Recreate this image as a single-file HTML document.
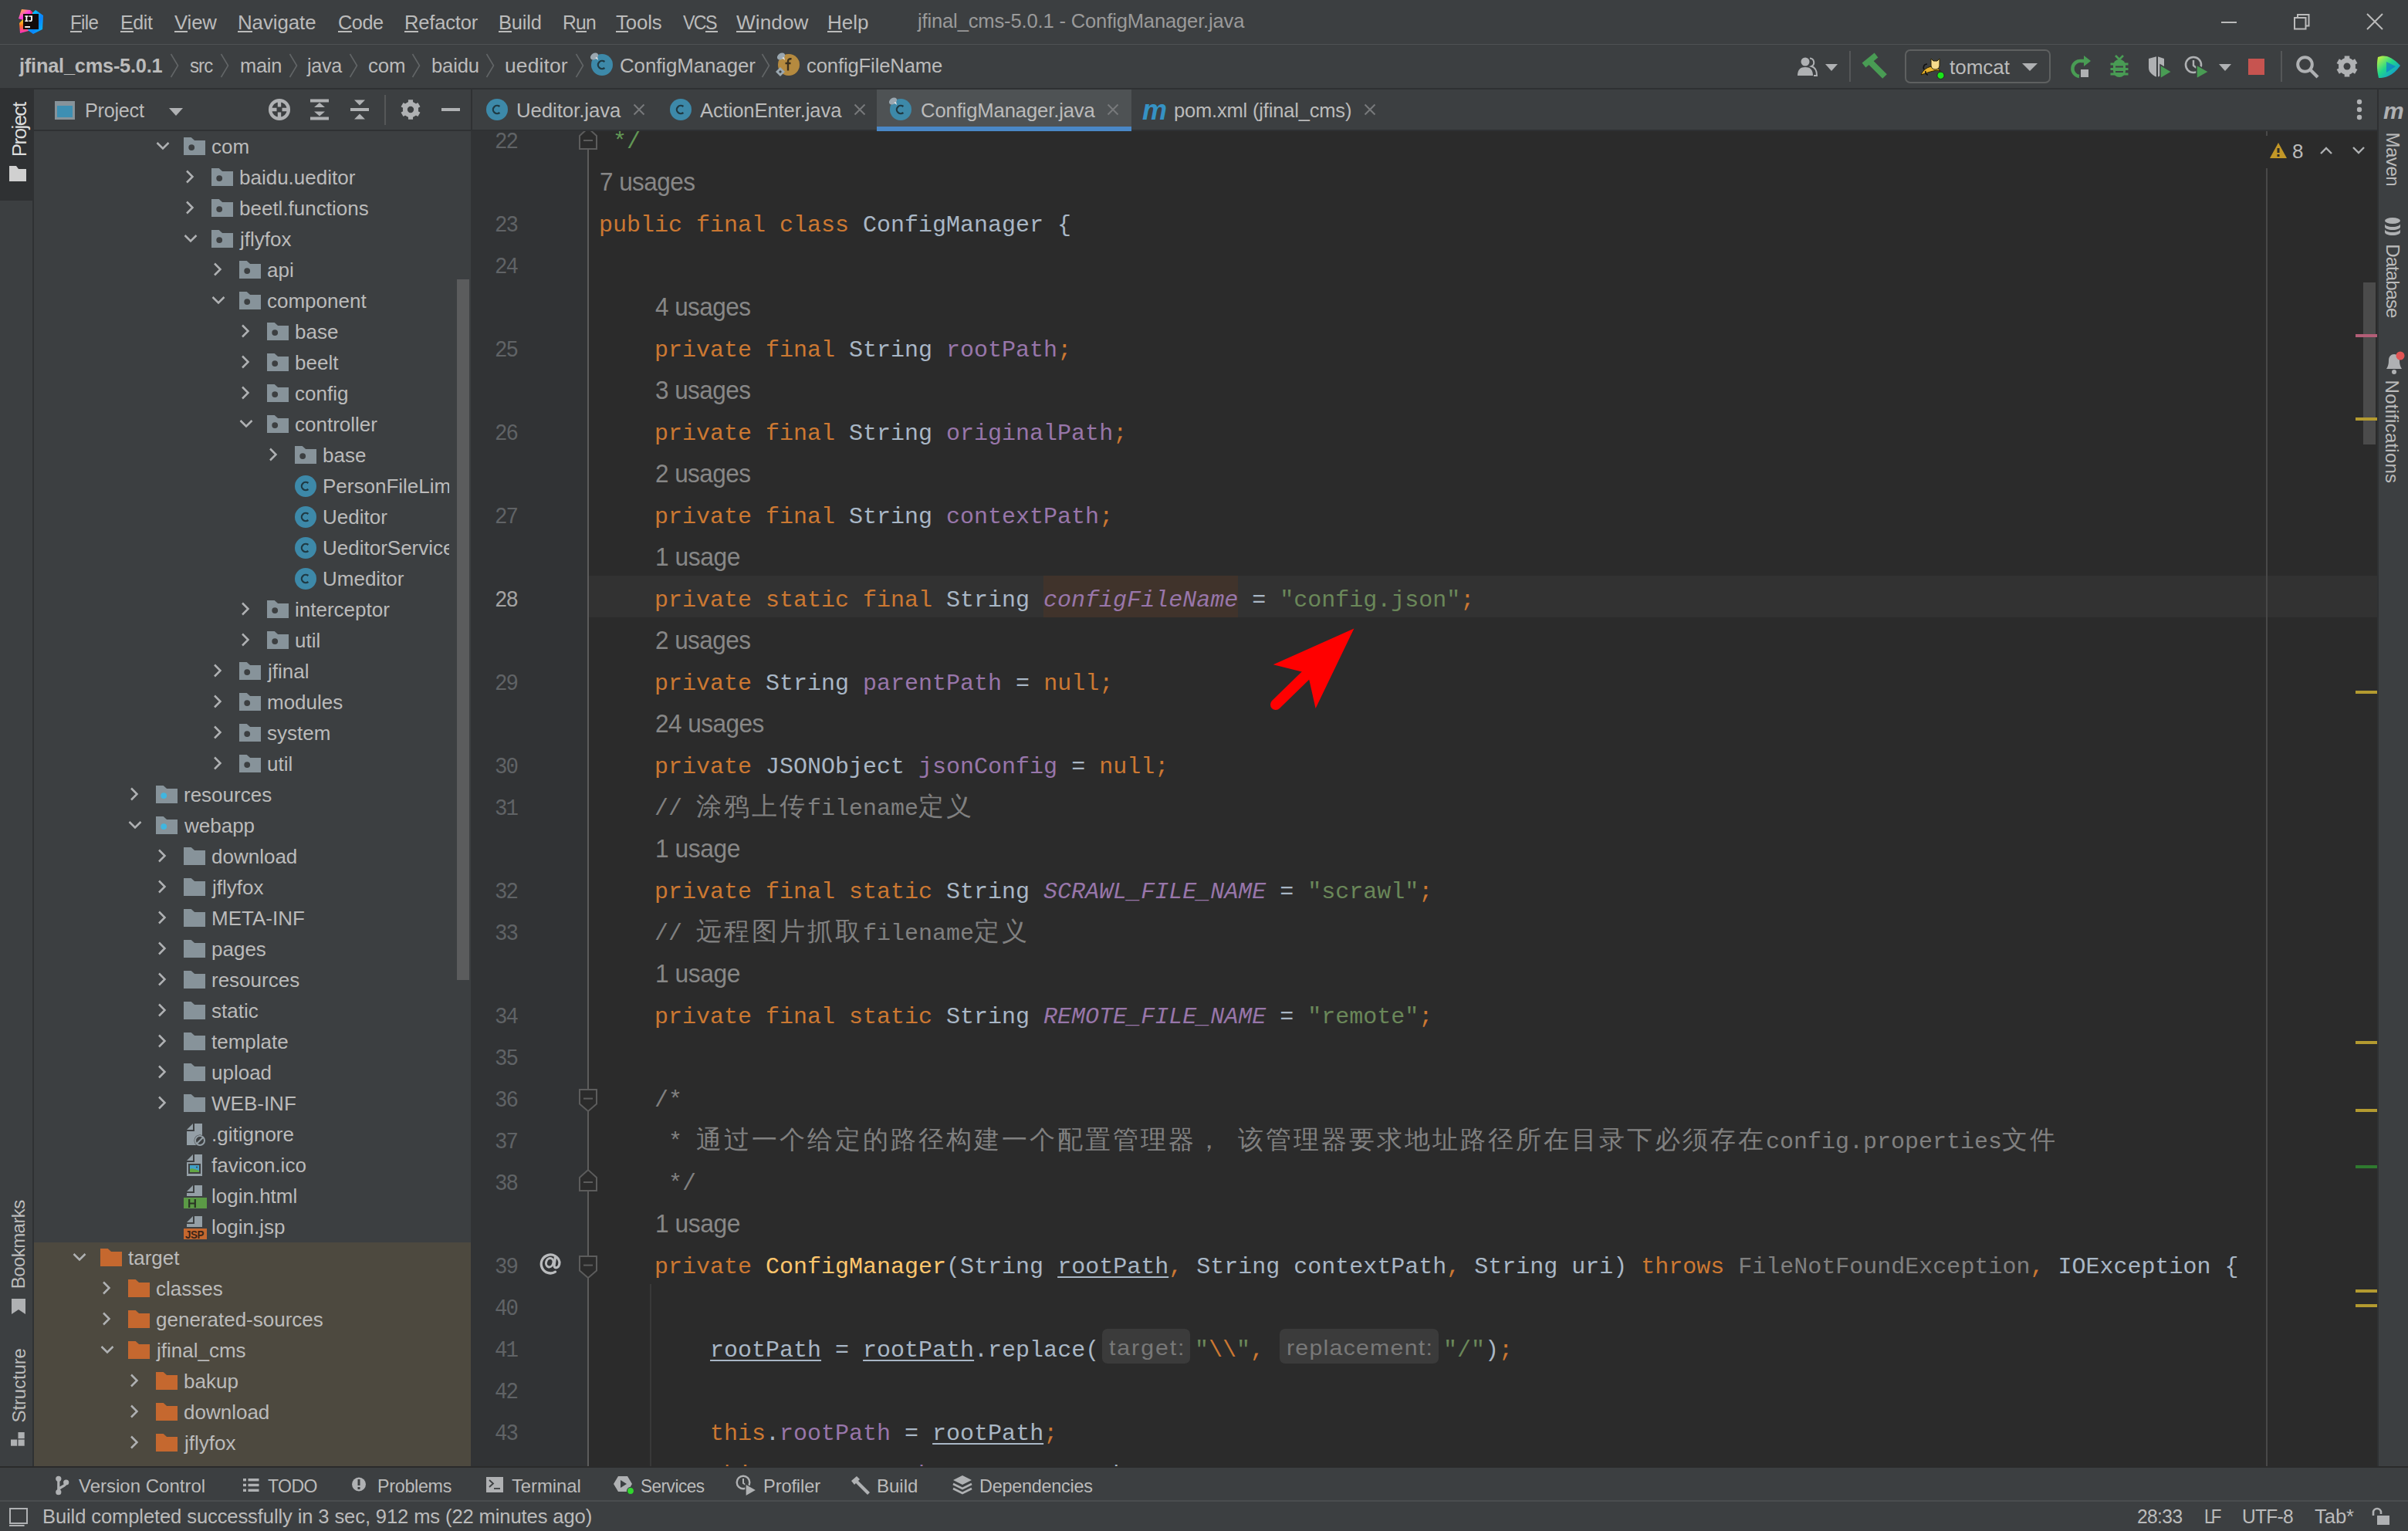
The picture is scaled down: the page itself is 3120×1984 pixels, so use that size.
<!DOCTYPE html>
<html><head><meta charset="utf-8"><style>
html,body{margin:0;padding:0;}
body{width:3120px;height:1984px;overflow:hidden;position:relative;background:#3c3f41;font-family:"Liberation Sans",sans-serif;}
.t{position:absolute;white-space:pre;}
svg{display:block;}
</style></head><body>
<div style="position:absolute;left:0px;top:0px;width:3120px;height:57px;background:#3c3f41;"></div><div style="position:absolute;left:0px;top:57px;width:3120px;height:1px;background:#4f5254;"></div><div style="position:absolute;left:0px;top:58px;width:3120px;height:57px;background:#3c3f41;"></div><div style="position:absolute;left:0px;top:114px;width:3120px;height:2px;background:#2f3133;"></div><div style="position:absolute;left:0px;top:116px;width:42px;height:1784px;background:#3c3f41;"></div><div style="position:absolute;left:0px;top:116px;width:42px;height:144px;background:#2f3133;"></div><div style="position:absolute;left:42px;top:116px;width:2px;height:1784px;background:#2f3133;"></div><div style="position:absolute;left:44px;top:116px;width:566px;height:52px;background:#3c3f41;"></div><div style="position:absolute;left:44px;top:168px;width:566px;height:2px;background:#2f3133;"></div><div style="position:absolute;left:44px;top:170px;width:566px;height:1730px;background:#3c3f41;"></div><div style="position:absolute;left:44px;top:1610px;width:566px;height:290px;background:#4d493f;"></div><div style="position:absolute;left:592px;top:362px;width:16px;height:908px;background:#5b5c5d;"></div><div style="position:absolute;left:610px;top:170px;width:2px;height:1730px;background:#313335;"></div><div style="position:absolute;left:610px;top:116px;width:2px;height:54px;background:#2f3133;"></div><div style="position:absolute;left:612px;top:116px;width:2468px;height:52px;background:#3c3f41;"></div><div style="position:absolute;left:612px;top:168px;width:2468px;height:2px;background:#2f3133;"></div><div style="position:absolute;left:612px;top:170px;width:150px;height:1730px;background:#313335;"></div><div style="position:absolute;left:762px;top:170px;width:2318px;height:1730px;background:#2b2b2b;"></div><div style="position:absolute;left:3080px;top:116px;width:2px;height:1784px;background:#2f3133;"></div><div style="position:absolute;left:3082px;top:116px;width:38px;height:1784px;background:#3c3f41;"></div><div class="t" style="left:91.00px;top:14px;font-family:'Liberation Sans',sans-serif;font-size:26px;line-height:30px;color:#bbbbbb;letter-spacing:-0.692px;transform:scaleX(0.9268);transform-origin:0.00px 0;">File</div><div style="position:absolute;left:91px;top:40px;width:15px;height:2px;background:#bbbbbb;"></div><div class="t" style="left:156.00px;top:14px;font-family:'Liberation Sans',sans-serif;font-size:26px;line-height:30px;color:#bbbbbb;letter-spacing:-0.408px;transform:scaleX(0.9603);transform-origin:0.00px 0;">Edit</div><div style="position:absolute;left:156px;top:40px;width:17px;height:2px;background:#bbbbbb;"></div><div class="t" style="left:226.00px;top:14px;font-family:'Liberation Sans',sans-serif;font-size:26px;line-height:30px;color:#bbbbbb;letter-spacing:-0.134px;transform:scaleX(0.9892);transform-origin:0.00px 0;">View</div><div style="position:absolute;left:226px;top:40px;width:17px;height:2px;background:#bbbbbb;"></div><div class="t" style="left:308.00px;top:14px;font-family:'Liberation Sans',sans-serif;font-size:26px;line-height:30px;color:#bbbbbb;letter-spacing:-0.057px;transform:scaleX(0.9942);transform-origin:0.00px 0;">Navigate</div><div style="position:absolute;left:308px;top:40px;width:19px;height:2px;background:#bbbbbb;"></div><div class="t" style="left:438.00px;top:14px;font-family:'Liberation Sans',sans-serif;font-size:26px;line-height:30px;color:#bbbbbb;letter-spacing:-0.406px;transform:scaleX(0.9707);transform-origin:0.00px 0;">Code</div><div style="position:absolute;left:438px;top:40px;width:18px;height:2px;background:#bbbbbb;"></div><div class="t" style="left:524.00px;top:14px;font-family:'Liberation Sans',sans-serif;font-size:26px;line-height:30px;color:#bbbbbb;letter-spacing:-0.173px;transform:scaleX(0.9817);transform-origin:0.00px 0;">Refactor</div><div style="position:absolute;left:524px;top:40px;width:18px;height:2px;background:#bbbbbb;"></div><div class="t" style="left:646.00px;top:14px;font-family:'Liberation Sans',sans-serif;font-size:26px;line-height:30px;color:#bbbbbb;letter-spacing:-0.202px;transform:scaleX(0.9792);transform-origin:0.00px 0;">Build</div><div style="position:absolute;left:646px;top:40px;width:17px;height:2px;background:#bbbbbb;"></div><div class="t" style="left:729.00px;top:14px;font-family:'Liberation Sans',sans-serif;font-size:26px;line-height:30px;color:#bbbbbb;letter-spacing:-0.821px;transform:scaleX(0.9491);transform-origin:0.00px 0;">Run</div><div style="position:absolute;left:746px;top:40px;width:14px;height:2px;background:#bbbbbb;"></div><div class="t" style="left:798.00px;top:14px;font-family:'Liberation Sans',sans-serif;font-size:26px;line-height:30px;color:#bbbbbb;letter-spacing:-0.100px;transform:scaleX(0.9901);transform-origin:0.00px 0;">Tools</div><div style="position:absolute;left:798px;top:40px;width:16px;height:2px;background:#bbbbbb;"></div><div class="t" style="left:885.00px;top:14px;font-family:'Liberation Sans',sans-serif;font-size:26px;line-height:30px;color:#bbbbbb;letter-spacing:-1.901px;transform:scaleX(0.8943);transform-origin:0.00px 0;">VCS</div><div style="position:absolute;left:914px;top:40px;width:16px;height:2px;background:#bbbbbb;"></div><div class="t" style="left:954.00px;top:14px;font-family:'Liberation Sans',sans-serif;font-size:26px;line-height:30px;color:#bbbbbb;letter-spacing:0.080px;transform:scaleX(1.0064);transform-origin:0.00px 0;">Window</div><div style="position:absolute;left:954px;top:40px;width:25px;height:2px;background:#bbbbbb;"></div><div class="t" style="left:1072.00px;top:14px;font-family:'Liberation Sans',sans-serif;font-size:26px;line-height:30px;color:#bbbbbb;letter-spacing:0.000px;">Help</div><div style="position:absolute;left:1072px;top:40px;width:19px;height:2px;background:#bbbbbb;"></div><div class="t" style="left:1189.00px;top:12px;font-family:'Liberation Sans',sans-serif;font-size:26px;line-height:30px;color:#9a9a9a;letter-spacing:-0.146px;transform:scaleX(0.9821);transform-origin:-1.00px 0;">jfinal_cms-5.0.1 - ConfigManager.java</div><div class="t" style="left:25.00px;top:70px;font-family:'Liberation Sans',sans-serif;font-size:26px;line-height:30px;color:#bbbbbb;letter-spacing:-0.216px;font-weight:bold;transform:scaleX(0.9752);transform-origin:-1.00px 0;">jfinal_cms-5.0.1</div><div class="t" style="left:246.00px;top:70px;font-family:'Liberation Sans',sans-serif;font-size:26px;line-height:30px;color:#bbbbbb;letter-spacing:-0.937px;transform:scaleX(0.9207);transform-origin:0.00px 0;">src</div><div class="t" style="left:311.00px;top:70px;font-family:'Liberation Sans',sans-serif;font-size:26px;line-height:30px;color:#bbbbbb;letter-spacing:-0.270px;transform:scaleX(0.9784);transform-origin:0.00px 0;">main</div><div class="t" style="left:397.50px;top:70px;font-family:'Liberation Sans',sans-serif;font-size:26px;line-height:30px;color:#bbbbbb;letter-spacing:-0.339px;transform:scaleX(0.9691);transform-origin:-1.00px 0;">java</div><div class="t" style="left:476.50px;top:70px;font-family:'Liberation Sans',sans-serif;font-size:26px;line-height:30px;color:#bbbbbb;letter-spacing:-0.100px;transform:scaleX(0.9939);transform-origin:0.00px 0;">com</div><div class="t" style="left:558.50px;top:70px;font-family:'Liberation Sans',sans-serif;font-size:26px;line-height:30px;color:#bbbbbb;letter-spacing:-0.151px;transform:scaleX(0.9859);transform-origin:0.00px 0;">baidu</div><div class="t" style="left:654.40px;top:70px;font-family:'Liberation Sans',sans-serif;font-size:26px;line-height:30px;color:#bbbbbb;letter-spacing:0.139px;transform:scaleX(1.0157);transform-origin:0.00px 0;">ueditor</div><div class="t" style="left:802.60px;top:70px;font-family:'Liberation Sans',sans-serif;font-size:26px;line-height:30px;color:#bbbbbb;letter-spacing:-0.064px;transform:scaleX(0.9936);transform-origin:0.00px 0;">ConfigManager</div><div class="t" style="left:1044.80px;top:70px;font-family:'Liberation Sans',sans-serif;font-size:26px;line-height:30px;color:#bbbbbb;letter-spacing:-0.136px;transform:scaleX(0.9853);transform-origin:0.00px 0;">configFileName</div><div class="t" style="left:110.00px;top:128px;font-family:'Liberation Sans',sans-serif;font-size:26px;line-height:30px;color:#bbbbbb;letter-spacing:-0.271px;transform:scaleX(0.9704);transform-origin:0.00px 0;">Project</div><div style="position:absolute;left:1136px;top:116px;width:330px;height:52px;background:#4e5254;"></div><div style="position:absolute;left:1136px;top:164px;width:330px;height:6px;background:#4a88c7;"></div><div class="t" style="left:669.00px;top:128px;font-family:'Liberation Sans',sans-serif;font-size:26px;line-height:30px;color:#bbbbbb;letter-spacing:-0.073px;transform:scaleX(0.9913);transform-origin:0.00px 0;">Ueditor.java</div><div class="t" style="left:906.50px;top:128px;font-family:'Liberation Sans',sans-serif;font-size:26px;line-height:30px;color:#bbbbbb;letter-spacing:-0.121px;transform:scaleX(0.9856);transform-origin:0.00px 0;">ActionEnter.java</div><div class="t" style="left:1192.50px;top:128px;font-family:'Liberation Sans',sans-serif;font-size:26px;line-height:30px;color:#bbbbbb;letter-spacing:-0.130px;transform:scaleX(0.9857);transform-origin:0.00px 0;">ConfigManager.java</div><div class="t" style="left:1521.00px;top:128px;font-family:'Liberation Sans',sans-serif;font-size:26px;line-height:30px;color:#bbbbbb;letter-spacing:-0.170px;transform:scaleX(0.9797);transform-origin:0.00px 0;">pom.xml (jfinal_cms)</div><div style="position:absolute;left:0;top:0;width:582px;height:1900px;overflow:hidden"><svg style="position:absolute;left:202px;top:182.5px;" width="18" height="12" viewBox="0 0 18 12"><path d="M1.5 2l7.5 7.5 7.5-7.5" fill="none" stroke="#afb1b3" stroke-width="2.5"/></svg><svg style="position:absolute;left:238px;top:177.8px;" width="28" height="23" viewBox="0 0 28 23"><path d="M0 0h9.7l4.4 4h13.9v22.2h-28z" fill="#87939a"/><circle cx="10.2" cy="13.1" r="3.9" fill="#3c3f41"/></svg><div class="t" style="left:274.00px;top:175px;font-family:'Liberation Sans',sans-serif;font-size:26px;line-height:30px;color:#bbbbbb;letter-spacing:0.000px;">com</div><svg style="position:absolute;left:240px;top:220px;" width="12" height="18" viewBox="0 0 12 18"><path d="M2 1.5l7.5 7.5-7.5 7.5" fill="none" stroke="#afb1b3" stroke-width="2.5"/></svg><svg style="position:absolute;left:274px;top:217.8px;" width="28" height="23" viewBox="0 0 28 23"><path d="M0 0h9.7l4.4 4h13.9v22.2h-28z" fill="#87939a"/><circle cx="10.2" cy="13.1" r="3.9" fill="#3c3f41"/></svg><div class="t" style="left:310.00px;top:215px;font-family:'Liberation Sans',sans-serif;font-size:26px;line-height:30px;color:#bbbbbb;letter-spacing:0.000px;">baidu.ueditor</div><svg style="position:absolute;left:240px;top:260px;" width="12" height="18" viewBox="0 0 12 18"><path d="M2 1.5l7.5 7.5-7.5 7.5" fill="none" stroke="#afb1b3" stroke-width="2.5"/></svg><svg style="position:absolute;left:274px;top:257.8px;" width="28" height="23" viewBox="0 0 28 23"><path d="M0 0h9.7l4.4 4h13.9v22.2h-28z" fill="#87939a"/><circle cx="10.2" cy="13.1" r="3.9" fill="#3c3f41"/></svg><div class="t" style="left:310.00px;top:255px;font-family:'Liberation Sans',sans-serif;font-size:26px;line-height:30px;color:#bbbbbb;letter-spacing:0.000px;">beetl.functions</div><svg style="position:absolute;left:238px;top:302.5px;" width="18" height="12" viewBox="0 0 18 12"><path d="M1.5 2l7.5 7.5 7.5-7.5" fill="none" stroke="#afb1b3" stroke-width="2.5"/></svg><svg style="position:absolute;left:274px;top:297.8px;" width="28" height="23" viewBox="0 0 28 23"><path d="M0 0h9.7l4.4 4h13.9v22.2h-28z" fill="#87939a"/><circle cx="10.2" cy="13.1" r="3.9" fill="#3c3f41"/></svg><div class="t" style="left:311.00px;top:295px;font-family:'Liberation Sans',sans-serif;font-size:26px;line-height:30px;color:#bbbbbb;letter-spacing:0.000px;">jflyfox</div><svg style="position:absolute;left:276px;top:340px;" width="12" height="18" viewBox="0 0 12 18"><path d="M2 1.5l7.5 7.5-7.5 7.5" fill="none" stroke="#afb1b3" stroke-width="2.5"/></svg><svg style="position:absolute;left:310px;top:337.8px;" width="28" height="23" viewBox="0 0 28 23"><path d="M0 0h9.7l4.4 4h13.9v22.2h-28z" fill="#87939a"/><circle cx="10.2" cy="13.1" r="3.9" fill="#3c3f41"/></svg><div class="t" style="left:346.00px;top:335px;font-family:'Liberation Sans',sans-serif;font-size:26px;line-height:30px;color:#bbbbbb;letter-spacing:0.000px;">api</div><svg style="position:absolute;left:274px;top:382.5px;" width="18" height="12" viewBox="0 0 18 12"><path d="M1.5 2l7.5 7.5 7.5-7.5" fill="none" stroke="#afb1b3" stroke-width="2.5"/></svg><svg style="position:absolute;left:310px;top:377.8px;" width="28" height="23" viewBox="0 0 28 23"><path d="M0 0h9.7l4.4 4h13.9v22.2h-28z" fill="#87939a"/><circle cx="10.2" cy="13.1" r="3.9" fill="#3c3f41"/></svg><div class="t" style="left:346.00px;top:375px;font-family:'Liberation Sans',sans-serif;font-size:26px;line-height:30px;color:#bbbbbb;letter-spacing:0.000px;">component</div><svg style="position:absolute;left:312px;top:420px;" width="12" height="18" viewBox="0 0 12 18"><path d="M2 1.5l7.5 7.5-7.5 7.5" fill="none" stroke="#afb1b3" stroke-width="2.5"/></svg><svg style="position:absolute;left:346px;top:417.8px;" width="28" height="23" viewBox="0 0 28 23"><path d="M0 0h9.7l4.4 4h13.9v22.2h-28z" fill="#87939a"/><circle cx="10.2" cy="13.1" r="3.9" fill="#3c3f41"/></svg><div class="t" style="left:382.00px;top:415px;font-family:'Liberation Sans',sans-serif;font-size:26px;line-height:30px;color:#bbbbbb;letter-spacing:0.000px;">base</div><svg style="position:absolute;left:312px;top:460px;" width="12" height="18" viewBox="0 0 12 18"><path d="M2 1.5l7.5 7.5-7.5 7.5" fill="none" stroke="#afb1b3" stroke-width="2.5"/></svg><svg style="position:absolute;left:346px;top:457.8px;" width="28" height="23" viewBox="0 0 28 23"><path d="M0 0h9.7l4.4 4h13.9v22.2h-28z" fill="#87939a"/><circle cx="10.2" cy="13.1" r="3.9" fill="#3c3f41"/></svg><div class="t" style="left:382.00px;top:455px;font-family:'Liberation Sans',sans-serif;font-size:26px;line-height:30px;color:#bbbbbb;letter-spacing:0.000px;">beelt</div><svg style="position:absolute;left:312px;top:500px;" width="12" height="18" viewBox="0 0 12 18"><path d="M2 1.5l7.5 7.5-7.5 7.5" fill="none" stroke="#afb1b3" stroke-width="2.5"/></svg><svg style="position:absolute;left:346px;top:497.8px;" width="28" height="23" viewBox="0 0 28 23"><path d="M0 0h9.7l4.4 4h13.9v22.2h-28z" fill="#87939a"/><circle cx="10.2" cy="13.1" r="3.9" fill="#3c3f41"/></svg><div class="t" style="left:382.00px;top:495px;font-family:'Liberation Sans',sans-serif;font-size:26px;line-height:30px;color:#bbbbbb;letter-spacing:0.000px;">config</div><svg style="position:absolute;left:310px;top:542.5px;" width="18" height="12" viewBox="0 0 18 12"><path d="M1.5 2l7.5 7.5 7.5-7.5" fill="none" stroke="#afb1b3" stroke-width="2.5"/></svg><svg style="position:absolute;left:346px;top:537.8px;" width="28" height="23" viewBox="0 0 28 23"><path d="M0 0h9.7l4.4 4h13.9v22.2h-28z" fill="#87939a"/><circle cx="10.2" cy="13.1" r="3.9" fill="#3c3f41"/></svg><div class="t" style="left:382.00px;top:535px;font-family:'Liberation Sans',sans-serif;font-size:26px;line-height:30px;color:#bbbbbb;letter-spacing:0.000px;">controller</div><svg style="position:absolute;left:348px;top:580px;" width="12" height="18" viewBox="0 0 12 18"><path d="M2 1.5l7.5 7.5-7.5 7.5" fill="none" stroke="#afb1b3" stroke-width="2.5"/></svg><svg style="position:absolute;left:382px;top:577.8px;" width="28" height="23" viewBox="0 0 28 23"><path d="M0 0h9.7l4.4 4h13.9v22.2h-28z" fill="#87939a"/><circle cx="10.2" cy="13.1" r="3.9" fill="#3c3f41"/></svg><div class="t" style="left:418.00px;top:575px;font-family:'Liberation Sans',sans-serif;font-size:26px;line-height:30px;color:#bbbbbb;letter-spacing:0.000px;">base</div><svg style="position:absolute;left:382px;top:616px;" width="28" height="28" viewBox="0 0 28 28"><circle cx="14" cy="14" r="14" fill="#3d89a9"/><path d="M17.4 10A5.2 5.2 0 1 0 17.4 18" fill="none" stroke="#1f3a44" stroke-width="2.3"/></svg><div class="t" style="left:418.00px;top:615px;font-family:'Liberation Sans',sans-serif;font-size:26px;line-height:30px;color:#bbbbbb;letter-spacing:0.000px;">PersonFileLimi</div><svg style="position:absolute;left:382px;top:656px;" width="28" height="28" viewBox="0 0 28 28"><circle cx="14" cy="14" r="14" fill="#3d89a9"/><path d="M17.4 10A5.2 5.2 0 1 0 17.4 18" fill="none" stroke="#1f3a44" stroke-width="2.3"/></svg><div class="t" style="left:418.00px;top:655px;font-family:'Liberation Sans',sans-serif;font-size:26px;line-height:30px;color:#bbbbbb;letter-spacing:0.000px;">Ueditor</div><svg style="position:absolute;left:382px;top:696px;" width="28" height="28" viewBox="0 0 28 28"><circle cx="14" cy="14" r="14" fill="#3d89a9"/><path d="M17.4 10A5.2 5.2 0 1 0 17.4 18" fill="none" stroke="#1f3a44" stroke-width="2.3"/></svg><div class="t" style="left:418.00px;top:695px;font-family:'Liberation Sans',sans-serif;font-size:26px;line-height:30px;color:#bbbbbb;letter-spacing:0.000px;">UeditorService</div><svg style="position:absolute;left:382px;top:736px;" width="28" height="28" viewBox="0 0 28 28"><circle cx="14" cy="14" r="14" fill="#3d89a9"/><path d="M17.4 10A5.2 5.2 0 1 0 17.4 18" fill="none" stroke="#1f3a44" stroke-width="2.3"/></svg><div class="t" style="left:418.00px;top:735px;font-family:'Liberation Sans',sans-serif;font-size:26px;line-height:30px;color:#bbbbbb;letter-spacing:0.000px;">Umeditor</div><svg style="position:absolute;left:312px;top:780px;" width="12" height="18" viewBox="0 0 12 18"><path d="M2 1.5l7.5 7.5-7.5 7.5" fill="none" stroke="#afb1b3" stroke-width="2.5"/></svg><svg style="position:absolute;left:346px;top:777.8px;" width="28" height="23" viewBox="0 0 28 23"><path d="M0 0h9.7l4.4 4h13.9v22.2h-28z" fill="#87939a"/><circle cx="10.2" cy="13.1" r="3.9" fill="#3c3f41"/></svg><div class="t" style="left:382.00px;top:775px;font-family:'Liberation Sans',sans-serif;font-size:26px;line-height:30px;color:#bbbbbb;letter-spacing:0.000px;">interceptor</div><svg style="position:absolute;left:312px;top:820px;" width="12" height="18" viewBox="0 0 12 18"><path d="M2 1.5l7.5 7.5-7.5 7.5" fill="none" stroke="#afb1b3" stroke-width="2.5"/></svg><svg style="position:absolute;left:346px;top:817.8px;" width="28" height="23" viewBox="0 0 28 23"><path d="M0 0h9.7l4.4 4h13.9v22.2h-28z" fill="#87939a"/><circle cx="10.2" cy="13.1" r="3.9" fill="#3c3f41"/></svg><div class="t" style="left:382.00px;top:815px;font-family:'Liberation Sans',sans-serif;font-size:26px;line-height:30px;color:#bbbbbb;letter-spacing:0.000px;">util</div><svg style="position:absolute;left:276px;top:860px;" width="12" height="18" viewBox="0 0 12 18"><path d="M2 1.5l7.5 7.5-7.5 7.5" fill="none" stroke="#afb1b3" stroke-width="2.5"/></svg><svg style="position:absolute;left:310px;top:857.8px;" width="28" height="23" viewBox="0 0 28 23"><path d="M0 0h9.7l4.4 4h13.9v22.2h-28z" fill="#87939a"/><circle cx="10.2" cy="13.1" r="3.9" fill="#3c3f41"/></svg><div class="t" style="left:347.00px;top:855px;font-family:'Liberation Sans',sans-serif;font-size:26px;line-height:30px;color:#bbbbbb;letter-spacing:0.000px;">jfinal</div><svg style="position:absolute;left:276px;top:900px;" width="12" height="18" viewBox="0 0 12 18"><path d="M2 1.5l7.5 7.5-7.5 7.5" fill="none" stroke="#afb1b3" stroke-width="2.5"/></svg><svg style="position:absolute;left:310px;top:897.8px;" width="28" height="23" viewBox="0 0 28 23"><path d="M0 0h9.7l4.4 4h13.9v22.2h-28z" fill="#87939a"/><circle cx="10.2" cy="13.1" r="3.9" fill="#3c3f41"/></svg><div class="t" style="left:346.00px;top:895px;font-family:'Liberation Sans',sans-serif;font-size:26px;line-height:30px;color:#bbbbbb;letter-spacing:0.000px;">modules</div><svg style="position:absolute;left:276px;top:940px;" width="12" height="18" viewBox="0 0 12 18"><path d="M2 1.5l7.5 7.5-7.5 7.5" fill="none" stroke="#afb1b3" stroke-width="2.5"/></svg><svg style="position:absolute;left:310px;top:937.8px;" width="28" height="23" viewBox="0 0 28 23"><path d="M0 0h9.7l4.4 4h13.9v22.2h-28z" fill="#87939a"/><circle cx="10.2" cy="13.1" r="3.9" fill="#3c3f41"/></svg><div class="t" style="left:346.00px;top:935px;font-family:'Liberation Sans',sans-serif;font-size:26px;line-height:30px;color:#bbbbbb;letter-spacing:0.000px;">system</div><svg style="position:absolute;left:276px;top:980px;" width="12" height="18" viewBox="0 0 12 18"><path d="M2 1.5l7.5 7.5-7.5 7.5" fill="none" stroke="#afb1b3" stroke-width="2.5"/></svg><svg style="position:absolute;left:310px;top:977.8px;" width="28" height="23" viewBox="0 0 28 23"><path d="M0 0h9.7l4.4 4h13.9v22.2h-28z" fill="#87939a"/><circle cx="10.2" cy="13.1" r="3.9" fill="#3c3f41"/></svg><div class="t" style="left:346.00px;top:975px;font-family:'Liberation Sans',sans-serif;font-size:26px;line-height:30px;color:#bbbbbb;letter-spacing:0.000px;">util</div><svg style="position:absolute;left:168px;top:1020px;" width="12" height="18" viewBox="0 0 12 18"><path d="M2 1.5l7.5 7.5-7.5 7.5" fill="none" stroke="#afb1b3" stroke-width="2.5"/></svg><svg style="position:absolute;left:202px;top:1017.8px;" width="28" height="23" viewBox="0 0 28 23"><path d="M0 0h9.7l4.4 4h13.9v22.2h-28z" fill="#87939a"/><circle cx="10.2" cy="13.1" r="3.9" fill="#40b6e0"/></svg><div class="t" style="left:238.00px;top:1015px;font-family:'Liberation Sans',sans-serif;font-size:26px;line-height:30px;color:#bbbbbb;letter-spacing:0.000px;">resources</div><svg style="position:absolute;left:166px;top:1062.5px;" width="18" height="12" viewBox="0 0 18 12"><path d="M1.5 2l7.5 7.5 7.5-7.5" fill="none" stroke="#afb1b3" stroke-width="2.5"/></svg><svg style="position:absolute;left:202px;top:1057.8px;" width="28" height="23" viewBox="0 0 28 23"><path d="M0 0h9.7l4.4 4h13.9v22.2h-28z" fill="#87939a"/><circle cx="10.2" cy="13.1" r="3.9" fill="#40b6e0"/></svg><div class="t" style="left:239.00px;top:1055px;font-family:'Liberation Sans',sans-serif;font-size:26px;line-height:30px;color:#bbbbbb;letter-spacing:0.000px;">webapp</div><svg style="position:absolute;left:204px;top:1100px;" width="12" height="18" viewBox="0 0 12 18"><path d="M2 1.5l7.5 7.5-7.5 7.5" fill="none" stroke="#afb1b3" stroke-width="2.5"/></svg><svg style="position:absolute;left:238px;top:1097.8px;" width="28" height="23" viewBox="0 0 28 23"><path d="M0 0h9.7l4.4 4h13.9v22.2h-28z" fill="#87939a"/></svg><div class="t" style="left:274.00px;top:1095px;font-family:'Liberation Sans',sans-serif;font-size:26px;line-height:30px;color:#bbbbbb;letter-spacing:0.000px;">download</div><svg style="position:absolute;left:204px;top:1140px;" width="12" height="18" viewBox="0 0 12 18"><path d="M2 1.5l7.5 7.5-7.5 7.5" fill="none" stroke="#afb1b3" stroke-width="2.5"/></svg><svg style="position:absolute;left:238px;top:1137.8px;" width="28" height="23" viewBox="0 0 28 23"><path d="M0 0h9.7l4.4 4h13.9v22.2h-28z" fill="#87939a"/></svg><div class="t" style="left:275.00px;top:1135px;font-family:'Liberation Sans',sans-serif;font-size:26px;line-height:30px;color:#bbbbbb;letter-spacing:0.000px;">jflyfox</div><svg style="position:absolute;left:204px;top:1180px;" width="12" height="18" viewBox="0 0 12 18"><path d="M2 1.5l7.5 7.5-7.5 7.5" fill="none" stroke="#afb1b3" stroke-width="2.5"/></svg><svg style="position:absolute;left:238px;top:1177.8px;" width="28" height="23" viewBox="0 0 28 23"><path d="M0 0h9.7l4.4 4h13.9v22.2h-28z" fill="#87939a"/></svg><div class="t" style="left:274.00px;top:1175px;font-family:'Liberation Sans',sans-serif;font-size:26px;line-height:30px;color:#bbbbbb;letter-spacing:0.000px;">META-INF</div><svg style="position:absolute;left:204px;top:1220px;" width="12" height="18" viewBox="0 0 12 18"><path d="M2 1.5l7.5 7.5-7.5 7.5" fill="none" stroke="#afb1b3" stroke-width="2.5"/></svg><svg style="position:absolute;left:238px;top:1217.8px;" width="28" height="23" viewBox="0 0 28 23"><path d="M0 0h9.7l4.4 4h13.9v22.2h-28z" fill="#87939a"/></svg><div class="t" style="left:274.00px;top:1215px;font-family:'Liberation Sans',sans-serif;font-size:26px;line-height:30px;color:#bbbbbb;letter-spacing:0.000px;">pages</div><svg style="position:absolute;left:204px;top:1260px;" width="12" height="18" viewBox="0 0 12 18"><path d="M2 1.5l7.5 7.5-7.5 7.5" fill="none" stroke="#afb1b3" stroke-width="2.5"/></svg><svg style="position:absolute;left:238px;top:1257.8px;" width="28" height="23" viewBox="0 0 28 23"><path d="M0 0h9.7l4.4 4h13.9v22.2h-28z" fill="#87939a"/></svg><div class="t" style="left:274.00px;top:1255px;font-family:'Liberation Sans',sans-serif;font-size:26px;line-height:30px;color:#bbbbbb;letter-spacing:0.000px;">resources</div><svg style="position:absolute;left:204px;top:1300px;" width="12" height="18" viewBox="0 0 12 18"><path d="M2 1.5l7.5 7.5-7.5 7.5" fill="none" stroke="#afb1b3" stroke-width="2.5"/></svg><svg style="position:absolute;left:238px;top:1297.8px;" width="28" height="23" viewBox="0 0 28 23"><path d="M0 0h9.7l4.4 4h13.9v22.2h-28z" fill="#87939a"/></svg><div class="t" style="left:274.00px;top:1295px;font-family:'Liberation Sans',sans-serif;font-size:26px;line-height:30px;color:#bbbbbb;letter-spacing:0.000px;">static</div><svg style="position:absolute;left:204px;top:1340px;" width="12" height="18" viewBox="0 0 12 18"><path d="M2 1.5l7.5 7.5-7.5 7.5" fill="none" stroke="#afb1b3" stroke-width="2.5"/></svg><svg style="position:absolute;left:238px;top:1337.8px;" width="28" height="23" viewBox="0 0 28 23"><path d="M0 0h9.7l4.4 4h13.9v22.2h-28z" fill="#87939a"/></svg><div class="t" style="left:274.00px;top:1335px;font-family:'Liberation Sans',sans-serif;font-size:26px;line-height:30px;color:#bbbbbb;letter-spacing:0.000px;">template</div><svg style="position:absolute;left:204px;top:1380px;" width="12" height="18" viewBox="0 0 12 18"><path d="M2 1.5l7.5 7.5-7.5 7.5" fill="none" stroke="#afb1b3" stroke-width="2.5"/></svg><svg style="position:absolute;left:238px;top:1377.8px;" width="28" height="23" viewBox="0 0 28 23"><path d="M0 0h9.7l4.4 4h13.9v22.2h-28z" fill="#87939a"/></svg><div class="t" style="left:274.00px;top:1375px;font-family:'Liberation Sans',sans-serif;font-size:26px;line-height:30px;color:#bbbbbb;letter-spacing:0.000px;">upload</div><svg style="position:absolute;left:204px;top:1420px;" width="12" height="18" viewBox="0 0 12 18"><path d="M2 1.5l7.5 7.5-7.5 7.5" fill="none" stroke="#afb1b3" stroke-width="2.5"/></svg><svg style="position:absolute;left:238px;top:1417.8px;" width="28" height="23" viewBox="0 0 28 23"><path d="M0 0h9.7l4.4 4h13.9v22.2h-28z" fill="#87939a"/></svg><div class="t" style="left:274.00px;top:1415px;font-family:'Liberation Sans',sans-serif;font-size:26px;line-height:30px;color:#bbbbbb;letter-spacing:0.000px;">WEB-INF</div><div class="t" style="left:274.00px;top:1455px;font-family:'Liberation Sans',sans-serif;font-size:26px;line-height:30px;color:#bbbbbb;letter-spacing:0.000px;">.gitignore</div><div class="t" style="left:274.00px;top:1495px;font-family:'Liberation Sans',sans-serif;font-size:26px;line-height:30px;color:#bbbbbb;letter-spacing:0.000px;">favicon.ico</div><div class="t" style="left:274.00px;top:1535px;font-family:'Liberation Sans',sans-serif;font-size:26px;line-height:30px;color:#bbbbbb;letter-spacing:0.000px;">login.html</div><div class="t" style="left:274.00px;top:1575px;font-family:'Liberation Sans',sans-serif;font-size:26px;line-height:30px;color:#bbbbbb;letter-spacing:0.000px;">login.jsp</div><svg style="position:absolute;left:94px;top:1622.5px;" width="18" height="12" viewBox="0 0 18 12"><path d="M1.5 2l7.5 7.5 7.5-7.5" fill="none" stroke="#afb1b3" stroke-width="2.5"/></svg><svg style="position:absolute;left:130px;top:1617.8px;" width="28" height="23" viewBox="0 0 28 23"><path d="M0 0h9.7l4.4 4h13.9v22.2h-28z" fill="#c5682f"/></svg><div class="t" style="left:166.00px;top:1615px;font-family:'Liberation Sans',sans-serif;font-size:26px;line-height:30px;color:#bbbbbb;letter-spacing:0.000px;">target</div><svg style="position:absolute;left:132px;top:1660px;" width="12" height="18" viewBox="0 0 12 18"><path d="M2 1.5l7.5 7.5-7.5 7.5" fill="none" stroke="#afb1b3" stroke-width="2.5"/></svg><svg style="position:absolute;left:166px;top:1657.8px;" width="28" height="23" viewBox="0 0 28 23"><path d="M0 0h9.7l4.4 4h13.9v22.2h-28z" fill="#c5682f"/></svg><div class="t" style="left:202.00px;top:1655px;font-family:'Liberation Sans',sans-serif;font-size:26px;line-height:30px;color:#bbbbbb;letter-spacing:0.000px;">classes</div><svg style="position:absolute;left:132px;top:1700px;" width="12" height="18" viewBox="0 0 12 18"><path d="M2 1.5l7.5 7.5-7.5 7.5" fill="none" stroke="#afb1b3" stroke-width="2.5"/></svg><svg style="position:absolute;left:166px;top:1697.8px;" width="28" height="23" viewBox="0 0 28 23"><path d="M0 0h9.7l4.4 4h13.9v22.2h-28z" fill="#c5682f"/></svg><div class="t" style="left:202.00px;top:1695px;font-family:'Liberation Sans',sans-serif;font-size:26px;line-height:30px;color:#bbbbbb;letter-spacing:0.000px;">generated-sources</div><svg style="position:absolute;left:130px;top:1742.5px;" width="18" height="12" viewBox="0 0 18 12"><path d="M1.5 2l7.5 7.5 7.5-7.5" fill="none" stroke="#afb1b3" stroke-width="2.5"/></svg><svg style="position:absolute;left:166px;top:1737.8px;" width="28" height="23" viewBox="0 0 28 23"><path d="M0 0h9.7l4.4 4h13.9v22.2h-28z" fill="#c5682f"/></svg><div class="t" style="left:203.00px;top:1735px;font-family:'Liberation Sans',sans-serif;font-size:26px;line-height:30px;color:#bbbbbb;letter-spacing:0.000px;">jfinal_cms</div><svg style="position:absolute;left:168px;top:1780px;" width="12" height="18" viewBox="0 0 12 18"><path d="M2 1.5l7.5 7.5-7.5 7.5" fill="none" stroke="#afb1b3" stroke-width="2.5"/></svg><svg style="position:absolute;left:202px;top:1777.8px;" width="28" height="23" viewBox="0 0 28 23"><path d="M0 0h9.7l4.4 4h13.9v22.2h-28z" fill="#c5682f"/></svg><div class="t" style="left:238.00px;top:1775px;font-family:'Liberation Sans',sans-serif;font-size:26px;line-height:30px;color:#bbbbbb;letter-spacing:0.000px;">bakup</div><svg style="position:absolute;left:168px;top:1820px;" width="12" height="18" viewBox="0 0 12 18"><path d="M2 1.5l7.5 7.5-7.5 7.5" fill="none" stroke="#afb1b3" stroke-width="2.5"/></svg><svg style="position:absolute;left:202px;top:1817.8px;" width="28" height="23" viewBox="0 0 28 23"><path d="M0 0h9.7l4.4 4h13.9v22.2h-28z" fill="#c5682f"/></svg><div class="t" style="left:238.00px;top:1815px;font-family:'Liberation Sans',sans-serif;font-size:26px;line-height:30px;color:#bbbbbb;letter-spacing:0.000px;">download</div><svg style="position:absolute;left:168px;top:1860px;" width="12" height="18" viewBox="0 0 12 18"><path d="M2 1.5l7.5 7.5-7.5 7.5" fill="none" stroke="#afb1b3" stroke-width="2.5"/></svg><svg style="position:absolute;left:202px;top:1857.8px;" width="28" height="23" viewBox="0 0 28 23"><path d="M0 0h9.7l4.4 4h13.9v22.2h-28z" fill="#c5682f"/></svg><div class="t" style="left:239.00px;top:1855px;font-family:'Liberation Sans',sans-serif;font-size:26px;line-height:30px;color:#bbbbbb;letter-spacing:0.000px;">jflyfox</div></div><div style="position:absolute;left:0;top:170px;width:3120px;height:1730px;overflow:hidden"><div style="position:absolute;left:0;top:-170px;width:3120px;height:1984px"><div style="position:absolute;left:763px;top:746.0px;width:2317px;height:54px;background:#323232;"></div><div style="position:absolute;left:1352px;top:746.0px;width:252px;height:54px;background:#40332b;"></div><div style="position:absolute;left:2936px;top:218px;width:2px;height:1682px;background:#484848;"></div><div style="position:absolute;left:2936px;top:170px;width:2px;height:6px;background:#484848;"></div><div style="position:absolute;left:842px;top:1664px;width:2px;height:236px;background:#393939;"></div><div class="t" style="left:776px;top:166.5px;font-family:'Liberation Mono',monospace;font-size:30px;line-height:34px"><span style="color:#629755;"> */</span></div><div class="t" style="left:777.00px;top:217.0px;font-family:'Liberation Sans',sans-serif;font-size:33px;line-height:37px;color:#878787;letter-spacing:-0.585px;transform:scaleX(0.9545);transform-origin:0.00px 0;">7 usages</div><div class="t" style="left:776px;top:274.5px;font-family:'Liberation Mono',monospace;font-size:30px;line-height:34px"><span style="color:#cc7832;">public final class </span><span style="color:#a9b7c6;">ConfigManager {</span></div><div class="t" style="left:849.00px;top:379.0px;font-family:'Liberation Sans',sans-serif;font-size:33px;line-height:37px;color:#878787;letter-spacing:-0.585px;transform:scaleX(0.9545);transform-origin:0.00px 0;">4 usages</div><div class="t" style="left:776px;top:436.5px;font-family:'Liberation Mono',monospace;font-size:30px;line-height:34px"><span style="color:#cc7832;">    private final </span><span style="color:#a9b7c6;">String </span><span style="color:#9876aa;">rootPath</span><span style="color:#cc7832;">;</span></div><div class="t" style="left:849.00px;top:487.0px;font-family:'Liberation Sans',sans-serif;font-size:33px;line-height:37px;color:#878787;letter-spacing:-0.585px;transform:scaleX(0.9545);transform-origin:0.00px 0;">3 usages</div><div class="t" style="left:776px;top:544.5px;font-family:'Liberation Mono',monospace;font-size:30px;line-height:34px"><span style="color:#cc7832;">    private final </span><span style="color:#a9b7c6;">String </span><span style="color:#9876aa;">originalPath</span><span style="color:#cc7832;">;</span></div><div class="t" style="left:849.00px;top:595.0px;font-family:'Liberation Sans',sans-serif;font-size:33px;line-height:37px;color:#878787;letter-spacing:-0.585px;transform:scaleX(0.9545);transform-origin:0.00px 0;">2 usages</div><div class="t" style="left:776px;top:652.5px;font-family:'Liberation Mono',monospace;font-size:30px;line-height:34px"><span style="color:#cc7832;">    private final </span><span style="color:#a9b7c6;">String </span><span style="color:#9876aa;">contextPath</span><span style="color:#cc7832;">;</span></div><div class="t" style="left:849.00px;top:703.0px;font-family:'Liberation Sans',sans-serif;font-size:33px;line-height:37px;color:#878787;letter-spacing:-0.475px;transform:scaleX(0.9637);transform-origin:0.00px 0;">1 usage</div><div class="t" style="left:776px;top:760.5px;font-family:'Liberation Mono',monospace;font-size:30px;line-height:34px"><span style="color:#cc7832;">    private static final </span><span style="color:#a9b7c6;">String </span><span style="color:#9876aa;font-style:italic">configFileName</span><span style="color:#a9b7c6;"> = </span><span style="color:#6a8759;">&quot;config.json&quot;</span><span style="color:#cc7832;">;</span></div><div class="t" style="left:849.00px;top:811.0px;font-family:'Liberation Sans',sans-serif;font-size:33px;line-height:37px;color:#878787;letter-spacing:-0.585px;transform:scaleX(0.9545);transform-origin:0.00px 0;">2 usages</div><div class="t" style="left:776px;top:868.5px;font-family:'Liberation Mono',monospace;font-size:30px;line-height:34px"><span style="color:#cc7832;">    private </span><span style="color:#a9b7c6;">String </span><span style="color:#9876aa;">parentPath</span><span style="color:#a9b7c6;"> = </span><span style="color:#cc7832;">null</span><span style="color:#cc7832;">;</span></div><div class="t" style="left:849.00px;top:919.0px;font-family:'Liberation Sans',sans-serif;font-size:33px;line-height:37px;color:#878787;letter-spacing:-0.562px;transform:scaleX(0.9559);transform-origin:0.00px 0;">24 usages</div><div class="t" style="left:776px;top:976.5px;font-family:'Liberation Mono',monospace;font-size:30px;line-height:34px"><span style="color:#cc7832;">    private </span><span style="color:#a9b7c6;">JSONObject </span><span style="color:#9876aa;">jsonConfig</span><span style="color:#a9b7c6;"> = </span><span style="color:#cc7832;">null</span><span style="color:#cc7832;">;</span></div><div class="t" style="left:776px;top:1030.5px;font-family:'Liberation Mono',monospace;font-size:30px;line-height:34px"><span style="color:#808080;">    // <span style="display:inline-block;width:36px;text-align:left;font-size:33px;line-height:30px">涂</span><span style="display:inline-block;width:36px;text-align:left;font-size:33px;line-height:30px">鸦</span><span style="display:inline-block;width:36px;text-align:left;font-size:33px;line-height:30px">上</span><span style="display:inline-block;width:36px;text-align:left;font-size:33px;line-height:30px">传</span>filename<span style="display:inline-block;width:36px;text-align:left;font-size:33px;line-height:30px">定</span><span style="display:inline-block;width:36px;text-align:left;font-size:33px;line-height:30px">义</span></span></div><div class="t" style="left:849.00px;top:1081.0px;font-family:'Liberation Sans',sans-serif;font-size:33px;line-height:37px;color:#878787;letter-spacing:-0.475px;transform:scaleX(0.9637);transform-origin:0.00px 0;">1 usage</div><div class="t" style="left:776px;top:1138.5px;font-family:'Liberation Mono',monospace;font-size:30px;line-height:34px"><span style="color:#cc7832;">    private final static </span><span style="color:#a9b7c6;">String </span><span style="color:#9876aa;font-style:italic">SCRAWL_FILE_NAME</span><span style="color:#a9b7c6;"> = </span><span style="color:#6a8759;">&quot;scrawl&quot;</span><span style="color:#cc7832;">;</span></div><div class="t" style="left:776px;top:1192.5px;font-family:'Liberation Mono',monospace;font-size:30px;line-height:34px"><span style="color:#808080;">    // <span style="display:inline-block;width:36px;text-align:left;font-size:33px;line-height:30px">远</span><span style="display:inline-block;width:36px;text-align:left;font-size:33px;line-height:30px">程</span><span style="display:inline-block;width:36px;text-align:left;font-size:33px;line-height:30px">图</span><span style="display:inline-block;width:36px;text-align:left;font-size:33px;line-height:30px">片</span><span style="display:inline-block;width:36px;text-align:left;font-size:33px;line-height:30px">抓</span><span style="display:inline-block;width:36px;text-align:left;font-size:33px;line-height:30px">取</span>filename<span style="display:inline-block;width:36px;text-align:left;font-size:33px;line-height:30px">定</span><span style="display:inline-block;width:36px;text-align:left;font-size:33px;line-height:30px">义</span></span></div><div class="t" style="left:849.00px;top:1243.0px;font-family:'Liberation Sans',sans-serif;font-size:33px;line-height:37px;color:#878787;letter-spacing:-0.475px;transform:scaleX(0.9637);transform-origin:0.00px 0;">1 usage</div><div class="t" style="left:776px;top:1300.5px;font-family:'Liberation Mono',monospace;font-size:30px;line-height:34px"><span style="color:#cc7832;">    private final static </span><span style="color:#a9b7c6;">String </span><span style="color:#9876aa;font-style:italic">REMOTE_FILE_NAME</span><span style="color:#a9b7c6;"> = </span><span style="color:#6a8759;">&quot;remote&quot;</span><span style="color:#cc7832;">;</span></div><div class="t" style="left:776px;top:1408.5px;font-family:'Liberation Mono',monospace;font-size:30px;line-height:34px"><span style="color:#808080;">    /*</span></div><div class="t" style="left:776px;top:1462.5px;font-family:'Liberation Mono',monospace;font-size:30px;line-height:34px"><span style="color:#808080;">     * <span style="display:inline-block;width:36px;text-align:left;font-size:33px;line-height:30px">通</span><span style="display:inline-block;width:36px;text-align:left;font-size:33px;line-height:30px">过</span><span style="display:inline-block;width:36px;text-align:left;font-size:33px;line-height:30px">一</span><span style="display:inline-block;width:36px;text-align:left;font-size:33px;line-height:30px">个</span><span style="display:inline-block;width:36px;text-align:left;font-size:33px;line-height:30px">给</span><span style="display:inline-block;width:36px;text-align:left;font-size:33px;line-height:30px">定</span><span style="display:inline-block;width:36px;text-align:left;font-size:33px;line-height:30px">的</span><span style="display:inline-block;width:36px;text-align:left;font-size:33px;line-height:30px">路</span><span style="display:inline-block;width:36px;text-align:left;font-size:33px;line-height:30px">径</span><span style="display:inline-block;width:36px;text-align:left;font-size:33px;line-height:30px">构</span><span style="display:inline-block;width:36px;text-align:left;font-size:33px;line-height:30px">建</span><span style="display:inline-block;width:36px;text-align:left;font-size:33px;line-height:30px">一</span><span style="display:inline-block;width:36px;text-align:left;font-size:33px;line-height:30px">个</span><span style="display:inline-block;width:36px;text-align:left;font-size:33px;line-height:30px">配</span><span style="display:inline-block;width:36px;text-align:left;font-size:33px;line-height:30px">置</span><span style="display:inline-block;width:36px;text-align:left;font-size:33px;line-height:30px">管</span><span style="display:inline-block;width:36px;text-align:left;font-size:33px;line-height:30px">理</span><span style="display:inline-block;width:36px;text-align:left;font-size:33px;line-height:30px">器</span><span style="display:inline-block;width:36px;text-align:left;font-size:33px;line-height:30px">，</span> <span style="display:inline-block;width:36px;text-align:left;font-size:33px;line-height:30px">该</span><span style="display:inline-block;width:36px;text-align:left;font-size:33px;line-height:30px">管</span><span style="display:inline-block;width:36px;text-align:left;font-size:33px;line-height:30px">理</span><span style="display:inline-block;width:36px;text-align:left;font-size:33px;line-height:30px">器</span><span style="display:inline-block;width:36px;text-align:left;font-size:33px;line-height:30px">要</span><span style="display:inline-block;width:36px;text-align:left;font-size:33px;line-height:30px">求</span><span style="display:inline-block;width:36px;text-align:left;font-size:33px;line-height:30px">地</span><span style="display:inline-block;width:36px;text-align:left;font-size:33px;line-height:30px">址</span><span style="display:inline-block;width:36px;text-align:left;font-size:33px;line-height:30px">路</span><span style="display:inline-block;width:36px;text-align:left;font-size:33px;line-height:30px">径</span><span style="display:inline-block;width:36px;text-align:left;font-size:33px;line-height:30px">所</span><span style="display:inline-block;width:36px;text-align:left;font-size:33px;line-height:30px">在</span><span style="display:inline-block;width:36px;text-align:left;font-size:33px;line-height:30px">目</span><span style="display:inline-block;width:36px;text-align:left;font-size:33px;line-height:30px">录</span><span style="display:inline-block;width:36px;text-align:left;font-size:33px;line-height:30px">下</span><span style="display:inline-block;width:36px;text-align:left;font-size:33px;line-height:30px">必</span><span style="display:inline-block;width:36px;text-align:left;font-size:33px;line-height:30px">须</span><span style="display:inline-block;width:36px;text-align:left;font-size:33px;line-height:30px">存</span><span style="display:inline-block;width:36px;text-align:left;font-size:33px;line-height:30px">在</span>config.properties<span style="display:inline-block;width:36px;text-align:left;font-size:33px;line-height:30px">文</span><span style="display:inline-block;width:36px;text-align:left;font-size:33px;line-height:30px">件</span></span></div><div class="t" style="left:776px;top:1516.5px;font-family:'Liberation Mono',monospace;font-size:30px;line-height:34px"><span style="color:#808080;">     */</span></div><div class="t" style="left:849.00px;top:1567.0px;font-family:'Liberation Sans',sans-serif;font-size:33px;line-height:37px;color:#878787;letter-spacing:-0.475px;transform:scaleX(0.9637);transform-origin:0.00px 0;">1 usage</div><div class="t" style="left:776px;top:1624.5px;font-family:'Liberation Mono',monospace;font-size:30px;line-height:34px"><span style="color:#cc7832;">    private </span><span style="color:#ffc66d;">ConfigManager</span><span style="color:#a9b7c6;">(String </span><span style="color:#a9b7c6;text-decoration:underline;text-decoration-color:#a9b7c6;text-underline-offset:4px;text-decoration-thickness:2px">rootPath</span><span style="color:#cc7832;">, </span><span style="color:#a9b7c6;">String contextPath</span><span style="color:#cc7832;">, </span><span style="color:#a9b7c6;">String uri) </span><span style="color:#cc7832;">throws </span><span style="color:#808080;">FileNotFoundException</span><span style="color:#cc7832;">, </span><span style="color:#a9b7c6;">IOException {</span></div><div class="t" style="left:776px;top:1732.5px;font-family:'Liberation Mono',monospace;font-size:30px;line-height:34px"><span style="color:#a9b7c6;">        </span><span style="color:#a9b7c6;text-decoration:underline;text-decoration-color:#a9b7c6;text-underline-offset:4px;text-decoration-thickness:2px">rootPath</span><span style="color:#a9b7c6;"> = </span><span style="color:#a9b7c6;text-decoration:underline;text-decoration-color:#a9b7c6;text-underline-offset:4px;text-decoration-thickness:2px">rootPath</span><span style="color:#a9b7c6;">.replace(</span></div><div style="position:absolute;left:1428px;top:1722.0px;width:114px;height:45px;background:#3b3b3b;border-radius:7px"></div><div class="t" style="left:1437.00px;top:1730.5px;font-family:'Liberation Sans',sans-serif;font-size:28px;line-height:31px;color:#787878;letter-spacing:1.802px;transform:scaleX(1.0800);transform-origin:0.00px 0;">target:</div><div style="position:absolute;left:1658px;top:1722.0px;width:206px;height:45px;background:#3b3b3b;border-radius:7px"></div><div class="t" style="left:1667.00px;top:1730.5px;font-family:'Liberation Sans',sans-serif;font-size:28px;line-height:31px;color:#787878;letter-spacing:1.182px;transform:scaleX(1.0800);transform-origin:0.00px 0;">replacement:</div><div class="t" style="left:1548px;top:1732.5px;font-family:'Liberation Mono',monospace;font-size:30px;line-height:34px"><span style="color:#6a8759">"</span><span style="color:#cc7832">\\</span><span style="color:#6a8759">"</span><span style="color:#cc7832">,</span></div><div class="t" style="left:1870px;top:1732.5px;font-family:'Liberation Mono',monospace;font-size:30px;line-height:34px"><span style="color:#6a8759">"/"</span><span style="color:#a9b7c6">)</span><span style="color:#cc7832">;</span></div><div class="t" style="left:776px;top:1840.5px;font-family:'Liberation Mono',monospace;font-size:30px;line-height:34px"><span style="color:#cc7832;">        this</span><span style="color:#a9b7c6;">.</span><span style="color:#9876aa;">rootPath</span><span style="color:#a9b7c6;"> = </span><span style="color:#a9b7c6;text-decoration:underline;text-decoration-color:#a9b7c6;text-underline-offset:4px;text-decoration-thickness:2px">rootPath</span><span style="color:#cc7832;">;</span></div><div class="t" style="left:776px;top:1894.5px;font-family:'Liberation Mono',monospace;font-size:30px;line-height:34px"><span style="color:#cc7832;">        this</span><span style="color:#a9b7c6;">.</span><span style="color:#9876aa;">contextPath</span><span style="color:#a9b7c6;"> = </span><span style="color:#a9b7c6;text-decoration:underline;text-decoration-color:#a9b7c6;text-underline-offset:4px;text-decoration-thickness:2px">contextPath</span><span style="color:#cc7832;">;</span></div><div class="t" style="left:641.00px;top:166.5px;font-family:'Liberation Mono',monospace;font-size:30px;line-height:34px;color:#606366;letter-spacing:-2.090px;transform:scaleX(0.9142);transform-origin:0.00px 0;">22</div><div class="t" style="left:641.00px;top:274.5px;font-family:'Liberation Mono',monospace;font-size:30px;line-height:34px;color:#606366;letter-spacing:-2.090px;transform:scaleX(0.9142);transform-origin:0.00px 0;">23</div><div class="t" style="left:641.00px;top:328.5px;font-family:'Liberation Mono',monospace;font-size:30px;line-height:34px;color:#606366;letter-spacing:-2.090px;transform:scaleX(0.9142);transform-origin:0.00px 0;">24</div><div class="t" style="left:641.00px;top:436.5px;font-family:'Liberation Mono',monospace;font-size:30px;line-height:34px;color:#606366;letter-spacing:-2.090px;transform:scaleX(0.9142);transform-origin:0.00px 0;">25</div><div class="t" style="left:641.00px;top:544.5px;font-family:'Liberation Mono',monospace;font-size:30px;line-height:34px;color:#606366;letter-spacing:-2.090px;transform:scaleX(0.9142);transform-origin:0.00px 0;">26</div><div class="t" style="left:641.00px;top:652.5px;font-family:'Liberation Mono',monospace;font-size:30px;line-height:34px;color:#606366;letter-spacing:-2.090px;transform:scaleX(0.9142);transform-origin:0.00px 0;">27</div><div class="t" style="left:641.00px;top:868.5px;font-family:'Liberation Mono',monospace;font-size:30px;line-height:34px;color:#606366;letter-spacing:-2.090px;transform:scaleX(0.9142);transform-origin:0.00px 0;">29</div><div class="t" style="left:641.00px;top:976.5px;font-family:'Liberation Mono',monospace;font-size:30px;line-height:34px;color:#606366;letter-spacing:-2.090px;transform:scaleX(0.9142);transform-origin:0.00px 0;">30</div><div class="t" style="left:641.00px;top:1030.5px;font-family:'Liberation Mono',monospace;font-size:30px;line-height:34px;color:#606366;letter-spacing:-2.090px;transform:scaleX(0.9142);transform-origin:0.00px 0;">31</div><div class="t" style="left:641.00px;top:1138.5px;font-family:'Liberation Mono',monospace;font-size:30px;line-height:34px;color:#606366;letter-spacing:-2.090px;transform:scaleX(0.9142);transform-origin:0.00px 0;">32</div><div class="t" style="left:641.00px;top:1192.5px;font-family:'Liberation Mono',monospace;font-size:30px;line-height:34px;color:#606366;letter-spacing:-2.090px;transform:scaleX(0.9142);transform-origin:0.00px 0;">33</div><div class="t" style="left:641.00px;top:1300.5px;font-family:'Liberation Mono',monospace;font-size:30px;line-height:34px;color:#606366;letter-spacing:-2.090px;transform:scaleX(0.9142);transform-origin:0.00px 0;">34</div><div class="t" style="left:641.00px;top:1354.5px;font-family:'Liberation Mono',monospace;font-size:30px;line-height:34px;color:#606366;letter-spacing:-2.090px;transform:scaleX(0.9142);transform-origin:0.00px 0;">35</div><div class="t" style="left:641.00px;top:1408.5px;font-family:'Liberation Mono',monospace;font-size:30px;line-height:34px;color:#606366;letter-spacing:-2.090px;transform:scaleX(0.9142);transform-origin:0.00px 0;">36</div><div class="t" style="left:641.00px;top:1462.5px;font-family:'Liberation Mono',monospace;font-size:30px;line-height:34px;color:#606366;letter-spacing:-2.090px;transform:scaleX(0.9142);transform-origin:0.00px 0;">37</div><div class="t" style="left:641.00px;top:1516.5px;font-family:'Liberation Mono',monospace;font-size:30px;line-height:34px;color:#606366;letter-spacing:-2.090px;transform:scaleX(0.9142);transform-origin:0.00px 0;">38</div><div class="t" style="left:641.00px;top:1624.5px;font-family:'Liberation Mono',monospace;font-size:30px;line-height:34px;color:#606366;letter-spacing:-2.090px;transform:scaleX(0.9142);transform-origin:0.00px 0;">39</div><div class="t" style="left:641.00px;top:1678.5px;font-family:'Liberation Mono',monospace;font-size:30px;line-height:34px;color:#606366;letter-spacing:-2.090px;transform:scaleX(0.9142);transform-origin:0.00px 0;">40</div><div class="t" style="left:641.00px;top:1732.5px;font-family:'Liberation Mono',monospace;font-size:30px;line-height:34px;color:#606366;letter-spacing:-2.090px;transform:scaleX(0.9142);transform-origin:0.00px 0;">41</div><div class="t" style="left:641.00px;top:1786.5px;font-family:'Liberation Mono',monospace;font-size:30px;line-height:34px;color:#606366;letter-spacing:-2.090px;transform:scaleX(0.9142);transform-origin:0.00px 0;">42</div><div class="t" style="left:641.00px;top:1840.5px;font-family:'Liberation Mono',monospace;font-size:30px;line-height:34px;color:#606366;letter-spacing:-2.090px;transform:scaleX(0.9142);transform-origin:0.00px 0;">43</div><div class="t" style="left:641.00px;top:1894.5px;font-family:'Liberation Mono',monospace;font-size:30px;line-height:34px;color:#606366;letter-spacing:-2.090px;transform:scaleX(0.9142);transform-origin:0.00px 0;">44</div><div class="t" style="left:641.00px;top:760.5px;font-family:'Liberation Mono',monospace;font-size:30px;line-height:34px;color:#a4a3a3;letter-spacing:-2.090px;transform:scaleX(0.9142);transform-origin:0.00px 0;">28</div><div style="position:absolute;left:761px;top:170px;width:2px;height:1730px;background:#5c5c5c;"></div><svg style="position:absolute;left:748px;top:164.0px;" width="28" height="32" viewBox="0 0 28 32"><path d="M3 29H25V12L14 2L3 12Z" fill="#2b2b2b" stroke="#5c5c5c" stroke-width="2"/><path d="M8 18H20" stroke="#5c5c5c" stroke-width="2"/></svg><svg style="position:absolute;left:748px;top:1410.0px;" width="28" height="32" viewBox="0 0 28 32"><path d="M3 2H25V20.6L14 30L3 20.6Z" fill="#2b2b2b" stroke="#5c5c5c" stroke-width="2"/><path d="M8 13.6H20" stroke="#5c5c5c" stroke-width="2"/></svg><svg style="position:absolute;left:748px;top:1514.0px;" width="28" height="32" viewBox="0 0 28 32"><path d="M3 29H25V12L14 2L3 12Z" fill="#2b2b2b" stroke="#5c5c5c" stroke-width="2"/><path d="M8 18H20" stroke="#5c5c5c" stroke-width="2"/></svg><svg style="position:absolute;left:748px;top:1626.0px;" width="28" height="32" viewBox="0 0 28 32"><path d="M3 2H25V20.6L14 30L3 20.6Z" fill="#2b2b2b" stroke="#5c5c5c" stroke-width="2"/><path d="M8 13.6H20" stroke="#5c5c5c" stroke-width="2"/></svg><svg style="position:absolute;left:696px;top:1619px;" width="34" height="36" viewBox="0 0 34 36"><path d="M23.5 29.2A12 12 0 1 1 29 16.5c0 5-2.2 7.3-4.6 7.3c-1.8 0-2.6-1.2-2.3-3.3L23.4 10.5" fill="none" stroke="#b9bbbd" stroke-width="3.3" stroke-linecap="round"/><ellipse cx="16.2" cy="17.2" rx="4.6" ry="5.8" transform="rotate(18 16.2 17.2)" fill="none" stroke="#b9bbbd" stroke-width="3"/></svg><svg style="position:absolute;left:1640px;top:805px;" width="125" height="125" viewBox="0 0 125 125"><g transform="translate(-1640,-805)"><path d="M1754.4 814.5L1649.7 861.3L1686.7 870.5L1696.3 881L1704.6 918Z" fill="#ff0000"/><path d="M1691 876L1653 913" stroke="#ff0000" stroke-width="14" stroke-linecap="round"/></g></svg><svg style="position:absolute;left:2940px;top:184px;" width="24" height="22" viewBox="0 0 24 22"><path d="M12 1L23 21H1z" fill="#c29727"/><rect x="10.5" y="8" width="3" height="6" fill="#2b2b2b"/><rect x="10.5" y="16" width="3" height="3" fill="#2b2b2b"/></svg><div class="t" style="left:2970.00px;top:181px;font-family:'Liberation Sans',sans-serif;font-size:26px;line-height:30px;color:#bbbbbb;letter-spacing:0.000px;">8</div><svg style="position:absolute;left:3005px;top:188px;" width="18" height="14" viewBox="0 0 18 14"><path d="M2 11l7-7 7 7" fill="none" stroke="#afb1b3" stroke-width="2.4"/></svg><svg style="position:absolute;left:3047px;top:188px;" width="18" height="14" viewBox="0 0 18 14"><path d="M2 3l7 7 7-7" fill="none" stroke="#afb1b3" stroke-width="2.4"/></svg><div style="position:absolute;left:3062px;top:366px;width:16px;height:210px;background:#4b4b4b;"></div><div style="position:absolute;left:3052px;top:433px;width:28px;height:4px;background:#b35e77;"></div><div style="position:absolute;left:3052px;top:541px;width:28px;height:4px;background:#b39a30;"></div><div style="position:absolute;left:3052px;top:895px;width:28px;height:4px;background:#b39a30;"></div><div style="position:absolute;left:3052px;top:1349px;width:28px;height:4px;background:#b39a30;"></div><div style="position:absolute;left:3052px;top:1437px;width:28px;height:4px;background:#b39a30;"></div><div style="position:absolute;left:3052px;top:1510px;width:28px;height:4px;background:#2f7a2f;"></div><div style="position:absolute;left:3052px;top:1671px;width:28px;height:4px;background:#b39a30;"></div><div style="position:absolute;left:3052px;top:1690px;width:28px;height:4px;background:#b39a30;"></div></div></div><svg style="position:absolute;left:20px;top:8px;" width="40" height="40" viewBox="0 0 40 40"><defs>
<linearGradient id="lg1" x1="0" y1="0" x2="1" y2="1"><stop offset="0" stop-color="#ffd21a"/><stop offset=".5" stop-color="#ff3ce6"/><stop offset="1" stop-color="#ff2a5e"/></linearGradient>
<linearGradient id="lg2" x1="0" y1="0" x2="0" y2="1"><stop offset="0" stop-color="#ffe01a"/><stop offset=".5" stop-color="#ff6a2a"/><stop offset="1" stop-color="#ff2ad0"/></linearGradient>
<linearGradient id="lg3" x1="0" y1="0" x2="1" y2="1"><stop offset="0" stop-color="#00e4ff"/><stop offset=".6" stop-color="#0a84ff"/><stop offset="1" stop-color="#00c8ff"/></linearGradient>
</defs>
<path d="M8 4L19 5L23 9L10 18L4 16Z" fill="url(#lg1)"/>
<path d="M19 5L23 9L20 12Z" fill="#ff2a5e"/>
<path d="M5 22L10 17L20 28L17 32L6 35Z" fill="url(#lg2)"/>
<path d="M22 9L26 5L36 12L35 30L23 36L16 31Z" fill="url(#lg3)"/>
<rect x="10" y="10" width="20" height="20" fill="#120a0a"/>
<path d="M12.3 12.2h4.2v1.6h-1.2v4.6h1.2v1.6h-4.2v-1.6h1.2v-4.6h-1.2z" fill="#fff"/>
<path d="M17.5 12.2h4.4v5.2c0 1.6-1 2.6-2.6 2.6c-1 0-1.8-.4-2.2-1l1-1.1c.3.4.7.6 1.1.6c.6 0 .9-.4.9-1.1v-3.6h-2.6z" fill="#fff"/>
<rect x="12.2" y="26" width="6.8" height="1.8" fill="#fff"/></svg><div style="position:absolute;left:2878px;top:28px;width:20px;height:2px;background:#bbbbbb;"></div><svg style="position:absolute;left:2968px;top:14px;" width="28" height="28" viewBox="0 0 28 28"><rect x="9" y="5" width="14.5" height="14.5" fill="none" stroke="#bbbbbb" stroke-width="2"/><rect x="5" y="9" width="14.5" height="14.5" fill="#3c3f41" stroke="#bbbbbb" stroke-width="2"/></svg><svg style="position:absolute;left:3065px;top:16px;" width="24" height="24" viewBox="0 0 24 24"><path d="M2 2l20 20M22 2L2 22" fill="none" stroke="#bbbbbb" stroke-width="2"/></svg><svg style="position:absolute;left:220px;top:69px;" width="12" height="32" viewBox="0 0 12 32"><path d="M1.5 1l9 15-9 15" fill="none" stroke="#626567" stroke-width="1.6"/></svg><svg style="position:absolute;left:285px;top:69px;" width="12" height="32" viewBox="0 0 12 32"><path d="M1.5 1l9 15-9 15" fill="none" stroke="#626567" stroke-width="1.6"/></svg><svg style="position:absolute;left:374px;top:69px;" width="12" height="32" viewBox="0 0 12 32"><path d="M1.5 1l9 15-9 15" fill="none" stroke="#626567" stroke-width="1.6"/></svg><svg style="position:absolute;left:452px;top:69px;" width="12" height="32" viewBox="0 0 12 32"><path d="M1.5 1l9 15-9 15" fill="none" stroke="#626567" stroke-width="1.6"/></svg><svg style="position:absolute;left:533px;top:69px;" width="12" height="32" viewBox="0 0 12 32"><path d="M1.5 1l9 15-9 15" fill="none" stroke="#626567" stroke-width="1.6"/></svg><svg style="position:absolute;left:629px;top:69px;" width="12" height="32" viewBox="0 0 12 32"><path d="M1.5 1l9 15-9 15" fill="none" stroke="#626567" stroke-width="1.6"/></svg><svg style="position:absolute;left:745px;top:69px;" width="12" height="32" viewBox="0 0 12 32"><path d="M1.5 1l9 15-9 15" fill="none" stroke="#626567" stroke-width="1.6"/></svg><svg style="position:absolute;left:986px;top:69px;" width="12" height="32" viewBox="0 0 12 32"><path d="M1.5 1l9 15-9 15" fill="none" stroke="#626567" stroke-width="1.6"/></svg><svg style="position:absolute;left:766px;top:70px;" width="28" height="28" viewBox="0 0 28 28"><circle cx="14" cy="14" r="14" fill="#3d89a9"/><path d="M17.4 10A5.2 5.2 0 1 0 17.4 18" fill="none" stroke="#1f3a44" stroke-width="2.3"/></svg><svg style="position:absolute;left:764px;top:67px;" width="14" height="14" viewBox="0 0 14 14"><ellipse cx="6" cy="6" rx="5.5" ry="4" transform="rotate(-35 6 6)" fill="#9aa7b0"/><path d="M7 8l4 3-1-4z" fill="#dfe1e5"/></svg><svg style="position:absolute;left:1008px;top:70px;" width="28" height="28" viewBox="0 0 28 28"><circle cx="14" cy="14" r="14" fill="#b58a3f"/><path d="M17.5 6.5c-2.5-.8-4.5.2-4.5 3v12M9.5 12h7" fill="none" stroke="#3a2f1e" stroke-width="2.4"/></svg><svg style="position:absolute;left:1006px;top:67px;" width="14" height="14" viewBox="0 0 14 14"><ellipse cx="6" cy="6" rx="5.5" ry="4" transform="rotate(-35 6 6)" fill="#9aa7b0"/><path d="M7 8l4 3-1-4z" fill="#dfe1e5"/></svg><svg style="position:absolute;left:1004px;top:86px;" width="14" height="14" viewBox="0 0 14 14"><path d="M7 1l6 6-6 6-6-6z" fill="#9aa7b0"/><path d="M7 5l2 2-2 2-2-2z" fill="#3c3f41"/></svg><svg style="position:absolute;left:2328px;top:73px;" width="32" height="26" viewBox="0 0 32 26"><circle cx="11" cy="7" r="5.5" fill="#afb1b3"/><path d="M1 25c0-8 4-11 10-11s10 3 10 11z" fill="#afb1b3"/><path d="M17 2.5a5.5 5.5 0 0 1 2 10.5c4 1 7 4 7 12h-4" fill="none" stroke="#afb1b3" stroke-width="2"/></svg><svg style="position:absolute;left:2364px;top:82px;" width="18" height="11" viewBox="0 0 18 11"><path d="M1 1h16l-8 9z" fill="#afb1b3"/></svg><div style="position:absolute;left:2396px;top:66px;width:2px;height:40px;background:#555758;"></div><svg style="position:absolute;left:2410px;top:66px;" width="40" height="40" viewBox="0 0 40 40"><path d="M5 18.5L21 5.5" stroke="#499c54" stroke-width="7.5"/><path d="M13 14L32 33" stroke="#499c54" stroke-width="8"/></svg><div style="position:absolute;left:2468px;top:64px;width:185px;height:40px;border:2px solid #5e6060;border-radius:7px"></div><svg style="position:absolute;left:2484px;top:72px;" width="40" height="34" viewBox="0 0 40 34"><path d="M5 25c3-7 9-11 16-11c3 0 6 2 9 6c-3-1-6-1-9 0c-5 1-10 3-16 5z" fill="#e8b22c" stroke="#2a2000" stroke-width="1"/><path d="M13 11c-4 0-6 4-4 7M11 20c-1 3 1 5 3 5" fill="none" stroke="#111" stroke-width="1.6"/><path d="M18 4l3 3h5l3-3v9c0 3-2.5 5-5.5 5s-5.5-2-5.5-5z" fill="#f6dc8c" stroke="#2a2000" stroke-width="1"/><circle cx="30.5" cy="25.8" r="4.6" fill="#19e619" stroke="#222" stroke-width="1"/></svg><div class="t" style="left:2526.00px;top:72px;font-family:'Liberation Sans',sans-serif;font-size:26px;line-height:30px;color:#bbbbbb;letter-spacing:0.000px;">tomcat</div><svg style="position:absolute;left:2619px;top:81px;" width="22" height="12" viewBox="0 0 22 12"><path d="M1 1h20l-10 10z" fill="#afb1b3"/></svg><svg style="position:absolute;left:2678px;top:66px;" width="36" height="40" viewBox="0 0 36 40"><path d="M16 33A10 10 0 1 1 19 13H26" fill="none" stroke="#499c54" stroke-width="4.4"/><path d="M22 6L31 13L22 20Z" fill="#499c54"/><rect x="18" y="24" width="10" height="10" fill="#afb1b3"/></svg><svg style="position:absolute;left:2730px;top:70px;" width="32" height="34" viewBox="0 0 32 34"><path d="M11 2l5 5M21 2l-5 5" stroke="#499c54" stroke-width="2.6"/><rect x="8" y="7" width="16" height="23" rx="8" fill="#499c54"/><rect x="4.5" y="11.5" width="23" height="3" fill="#499c54"/><rect x="4.5" y="18" width="23" height="3" fill="#499c54"/><rect x="4.5" y="24.5" width="23" height="3" fill="#499c54"/><rect x="11" y="15.5" width="10" height="2" fill="#3c3f41"/><rect x="11" y="22" width="10" height="2" fill="#3c3f41"/></svg><svg style="position:absolute;left:2782px;top:72px;" width="34" height="30" viewBox="0 0 34 30"><path d="M2 4l11-3 9 3v12c0 6-4 10-9 12c-5-2-11-6-11-12z" fill="#afb1b3"/><path d="M13 1v27" stroke="#3c3f41" stroke-width="2"/><path d="M17 12l15 9-15 9z" fill="#499c54" stroke="#3c3f41" stroke-width="1.5"/></svg><svg style="position:absolute;left:2830px;top:72px;" width="34" height="30" viewBox="0 0 34 30"><circle cx="12" cy="12" r="10" fill="none" stroke="#afb1b3" stroke-width="2.6"/><path d="M12 6v7l4 3" fill="none" stroke="#afb1b3" stroke-width="2.4"/><path d="M16 12l16 9-16 9z" fill="#499c54" stroke="#3c3f41" stroke-width="1.5"/></svg><svg style="position:absolute;left:2874px;top:82px;" width="18" height="11" viewBox="0 0 18 11"><path d="M1 1h16l-8 9z" fill="#afb1b3"/></svg><div style="position:absolute;left:2913px;top:76px;width:21px;height:21px;background:#c75450;"></div><div style="position:absolute;left:2955px;top:66px;width:2px;height:40px;background:#555758;"></div><svg style="position:absolute;left:2974px;top:71px;" width="34" height="32" viewBox="0 0 34 32"><circle cx="12.5" cy="12.5" r="9.3" fill="none" stroke="#afb1b3" stroke-width="4"/><path d="M19.5 19.5l9.5 9.5" stroke="#afb1b3" stroke-width="4.2" stroke-linecap="butt"/></svg><svg style="position:absolute;left:3027px;top:72px;" width="28" height="28" viewBox="0 0 28 28"><path d="M9.02 4.28 L10.77 3.57 L10.67 0.40 L17.33 0.40 L17.23 3.57 L19.93 4.83 L21.42 5.99 L24.11 4.32 L27.44 10.08 L24.65 11.58 L24.91 14.55 L24.65 16.42 L27.44 17.92 L24.11 23.68 L21.42 22.01 L18.98 23.72 L17.23 24.43 L17.33 27.60 L10.67 27.60 L10.77 24.43 L8.07 23.17 L6.58 22.01 L3.89 23.68 L0.56 17.92 L3.35 16.42 L3.09 13.45 L3.35 11.58 L0.56 10.08 L3.89 4.32 L6.58 5.99Z" fill="#afb1b3"/><circle cx="14.0" cy="14.0" r="10.7016" fill="#afb1b3"/><circle cx="14.0" cy="14.0" r="4.48" fill="#3c3f41"/></svg><svg style="position:absolute;left:3078px;top:70px;" width="34" height="34" viewBox="0 0 34 34"><defs><linearGradient id="tb" x1="0" y1="0" x2="1" y2="1"><stop offset="0" stop-color="#d6f53a"/><stop offset=".45" stop-color="#21d789"/><stop offset="1" stop-color="#087cfa"/></linearGradient></defs>
<path d="M3 4c7-3 16-3 29 11c-10 14-20 16-28 16c-2-9-3-17-1-27z" fill="url(#tb)"/><path d="M14 10l12 6-12 8z" fill="#0a64d8" opacity=".55"/></svg><svg style="position:absolute;left:70px;top:130px;" width="28" height="26" viewBox="0 0 28 26"><rect x="1" y="1" width="26" height="24" fill="#87939a"/><rect x="4" y="7" width="20" height="15" fill="#3d8fb3"/></svg><svg style="position:absolute;left:218px;top:139px;" width="20" height="12" viewBox="0 0 20 12"><path d="M1 1h18l-9 10z" fill="#afb1b3"/></svg><svg style="position:absolute;left:346px;top:126px;" width="32" height="32" viewBox="0 0 32 32"><circle cx="16" cy="16" r="11.9" fill="none" stroke="#afb1b3" stroke-width="4.3"/><path d="M16 5v7.5M16 19.5v7.5M5 16h7.5M19.5 16h7.5" stroke="#afb1b3" stroke-width="4.4"/></svg><svg style="position:absolute;left:401px;top:127px;" width="28" height="30" viewBox="0 0 28 30"><path d="M1 3.5h24M1 26.5h24" stroke="#afb1b3" stroke-width="4"/><path d="M6 12l7-6 7 6zM6 17.5l7 6 7-6z" fill="#afb1b3"/></svg><svg style="position:absolute;left:453px;top:127px;" width="28" height="30" viewBox="0 0 28 30"><path d="M1 15h24" stroke="#afb1b3" stroke-width="4"/><path d="M6 2.5l7 7 7-7zM6 27.5l7-7 7 7z" fill="#afb1b3"/></svg><div style="position:absolute;left:498px;top:123px;width:2px;height:39px;background:#555758;"></div><svg style="position:absolute;left:519px;top:129px;" width="26" height="26" viewBox="0 0 26 26"><path d="M8.38 3.98 L10.00 3.31 L9.91 0.37 L16.09 0.37 L16.00 3.31 L18.50 4.48 L19.89 5.56 L22.39 4.01 L25.48 9.36 L22.89 10.75 L23.13 13.51 L22.89 15.25 L25.48 16.64 L22.39 21.99 L19.89 20.44 L17.62 22.02 L16.00 22.69 L16.09 25.63 L9.91 25.63 L10.00 22.69 L7.50 21.52 L6.11 20.44 L3.61 21.99 L0.52 16.64 L3.11 15.25 L2.87 12.49 L3.11 10.75 L0.52 9.36 L3.61 4.01 L6.11 5.56Z" fill="#afb1b3"/><circle cx="13.0" cy="13.0" r="9.9372" fill="#afb1b3"/><circle cx="13.0" cy="13.0" r="4.16" fill="#3c3f41"/></svg><div style="position:absolute;left:572px;top:140px;width:24px;height:4px;background:#afb1b3;"></div><svg style="position:absolute;left:630px;top:128px;" width="28" height="28" viewBox="0 0 28 28"><circle cx="14" cy="14" r="14" fill="#3d89a9"/><path d="M17.4 10A5.2 5.2 0 1 0 17.4 18" fill="none" stroke="#1f3a44" stroke-width="2.3"/></svg><svg style="position:absolute;left:868px;top:128px;" width="28" height="28" viewBox="0 0 28 28"><circle cx="14" cy="14" r="14" fill="#3d89a9"/><path d="M17.4 10A5.2 5.2 0 1 0 17.4 18" fill="none" stroke="#1f3a44" stroke-width="2.3"/></svg><svg style="position:absolute;left:1153px;top:128px;" width="28" height="28" viewBox="0 0 28 28"><circle cx="14" cy="14" r="14" fill="#3d89a9"/><path d="M17.4 10A5.2 5.2 0 1 0 17.4 18" fill="none" stroke="#1f3a44" stroke-width="2.3"/></svg><svg style="position:absolute;left:1151px;top:125px;" width="14" height="14" viewBox="0 0 14 14"><ellipse cx="6" cy="6" rx="5.5" ry="4" transform="rotate(-35 6 6)" fill="#9aa7b0"/><path d="M7 8l4 3-1-4z" fill="#dfe1e5"/></svg><div class="t" style="left:1480.00px;top:122px;font-family:'Liberation Sans',sans-serif;font-size:36px;line-height:41px;color:#3592c4;letter-spacing:0.000px;font-weight:bold;font-style:italic;">m</div><svg style="position:absolute;left:820px;top:134px;" width="16" height="16" viewBox="0 0 16 16"><path d="M1.5 1.5l13 13M14.5 1.5l-13 13" stroke="#77797b" stroke-width="2"/></svg><svg style="position:absolute;left:1106px;top:134px;" width="16" height="16" viewBox="0 0 16 16"><path d="M1.5 1.5l13 13M14.5 1.5l-13 13" stroke="#77797b" stroke-width="2"/></svg><svg style="position:absolute;left:1434px;top:134px;" width="16" height="16" viewBox="0 0 16 16"><path d="M1.5 1.5l13 13M14.5 1.5l-13 13" stroke="#77797b" stroke-width="2"/></svg><svg style="position:absolute;left:1767px;top:134px;" width="16" height="16" viewBox="0 0 16 16"><path d="M1.5 1.5l13 13M14.5 1.5l-13 13" stroke="#77797b" stroke-width="2"/></svg><svg style="position:absolute;left:3052px;top:128px;" width="10" height="28" viewBox="0 0 10 28"><circle cx="5" cy="4" r="3.2" fill="#afb1b3"/><circle cx="5" cy="14" r="3.2" fill="#afb1b3"/><circle cx="5" cy="24" r="3.2" fill="#afb1b3"/></svg><div class="t" style="left:-11.2px;top:151.8px;width:92.5px;font-size:26px;line-height:30px;color:#dddddd;letter-spacing:-1.58px;transform:rotate(-90deg);transform-origin:36.2px 15.0px">Project</div><svg style="position:absolute;left:12px;top:215px;" width="22" height="20" viewBox="0 0 22 20"><path d="M0 0h9l3 4h10v16h-22z" fill="#d0d0d0"/></svg><div class="t" style="left:-33.8px;top:1598.8px;width:135.5px;font-size:24px;line-height:27px;color:#bbbbbb;letter-spacing:-0.56px;transform:rotate(-90deg);transform-origin:57.8px 13.5px">Bookmarks</div><svg style="position:absolute;left:13px;top:1682px;" width="22" height="22" viewBox="0 0 22 22"><path d="M2 1h18v20l-9-6-9 6z" fill="#afb1b3"/></svg><div class="t" style="left:-24.0px;top:1781.5px;width:116px;font-size:24px;line-height:27px;color:#bbbbbb;letter-spacing:-0.12px;transform:rotate(-90deg);transform-origin:48.0px 13.5px">Structure</div><svg style="position:absolute;left:12px;top:1854px;" width="22" height="22" viewBox="0 0 22 22"><rect x="11.5" y="2" width="8.2" height="8.2" fill="#afb1b3"/><rect x="2" y="11.5" width="8.2" height="8.2" fill="#afb1b3"/><rect x="11.5" y="11.5" width="8.2" height="8.2" fill="#afb1b3"/></svg><div class="t" style="left:3088.00px;top:127px;font-family:'Liberation Sans',sans-serif;font-size:30px;line-height:33px;color:#afb1b3;letter-spacing:0.000px;font-weight:bold;font-style:italic;">m</div><div class="t" style="left:3064.9px;top:193.0px;width:90.19999999999999px;font-size:24px;line-height:27px;color:#bbbbbb;letter-spacing:-0.45px;transform:rotate(90deg);transform-origin:35.1px 13.5px">Maven</div><svg style="position:absolute;left:3088px;top:281px;" width="24" height="28" viewBox="0 0 24 28"><ellipse cx="12" cy="5" rx="10" ry="4" fill="#afb1b3"/><path d="M2 9c0 2 4 4 10 4s10-2 10-4v4c0 2-4 4-10 4s-10-2-10-4zM2 16c0 2 4 4 10 4s10-2 10-4v4c0 2-4 4-10 4s-10-2-10-4z" fill="#afb1b3"/></svg><div class="t" style="left:3051.8px;top:351.4px;width:116.30000000000001px;font-size:24px;line-height:27px;color:#bbbbbb;letter-spacing:-0.96px;transform:rotate(90deg);transform-origin:48.2px 13.5px">Database</div><svg style="position:absolute;left:3088px;top:454px;" width="28" height="32" viewBox="0 0 28 32"><path d="M4 24c2-3 3-6 3-11c0-5 3-8 7-8s7 3 7 8c0 5 1 8 3 11z" fill="#afb1b3"/><circle cx="14" cy="28" r="3" fill="#afb1b3"/><circle cx="22" cy="7" r="5.5" fill="#e05555"/></svg><div class="t" style="left:3033.2px;top:546.4px;width:153.70000000000005px;font-size:24px;line-height:27px;color:#bbbbbb;letter-spacing:0.23px;transform:rotate(90deg);transform-origin:66.9px 13.5px">Notifications</div><svg style="position:absolute;left:242px;top:1456px;" width="20" height="28" viewBox="0 0 20 28"><path d="M0 8L8 0V8Z" fill="#949fa6"/><path d="M10 0H20V28H0V10H10Z" fill="#949fa6"/></svg><svg style="position:absolute;left:250px;top:1469px;" width="18" height="18" viewBox="0 0 18 18"><circle cx="9" cy="9" r="7.5" fill="#3c3f41"/><circle cx="9" cy="9" r="6" fill="none" stroke="#949fa6" stroke-width="2"/><path d="M5 13L13 5" stroke="#949fa6" stroke-width="2"/></svg><svg style="position:absolute;left:242px;top:1496px;" width="20" height="28" viewBox="0 0 20 28"><path d="M0 8L8 0V8Z" fill="#949fa6"/><path d="M10 0H20V28H0V10H10Z" fill="#949fa6"/></svg><svg style="position:absolute;left:243px;top:1507px;" width="18" height="15" viewBox="0 0 18 15"><rect x="1" y="1" width="16" height="13" fill="#3c3f41"/><rect x="3" y="3" width="12" height="9" fill="#40a0c8"/><path d="M3 8c3-2 6 0 12 2v2H3z" fill="#62a543"/><circle cx="12" cy="5.5" r="1" fill="#3c3f41"/></svg><svg style="position:absolute;left:242px;top:1536px;" width="20" height="15" viewBox="0 0 20 15"><path d="M0 8L8 0V8Z" fill="#949fa6"/><path d="M10 0H20V14H0V10H10Z" fill="#949fa6"/></svg><div style="position:absolute;left:238px;top:1552px;width:30px;height:14px;background:#5b9a46;"></div><svg style="position:absolute;left:244px;top:1553.5px;" width="10" height="11" viewBox="0 0 10 11"><path d="M1.2 0v11M8.8 0v11M1.2 5.5h7.6" stroke="#2a3324" stroke-width="2.2"/></svg><svg style="position:absolute;left:242px;top:1576px;" width="20" height="15" viewBox="0 0 20 15"><path d="M0 8L8 0V8Z" fill="#949fa6"/><path d="M10 0H20V14H0V10H10Z" fill="#949fa6"/></svg><div style="position:absolute;left:238px;top:1592px;width:30px;height:14px;background:#c5682f;"></div><div class="t" style="left:240.00px;top:1592px;font-family:'Liberation Sans',sans-serif;font-size:14px;line-height:16px;color:#3a2418;letter-spacing:-0.410px;font-weight:bold;transform:scaleX(0.9531);transform-origin:0.00px 0;">JSP</div><svg style="position:absolute;left:70px;top:1912px;" width="22" height="27" viewBox="0 0 22 27"><circle cx="5.8" cy="4.3" r="3.6" fill="#afb1b3"/><circle cx="5.8" cy="21.7" r="3.6" fill="#afb1b3"/><circle cx="15.7" cy="9" r="3.6" fill="#afb1b3"/><path d="M5.8 4V22M15.7 9c0 6-9.9 5-9.9 11" fill="none" stroke="#afb1b3" stroke-width="3.2"/></svg><div style="position:absolute;left:0px;top:1900px;width:3120px;height:2px;background:#2b2b2b;"></div><div style="position:absolute;left:0px;top:1902px;width:3120px;height:42px;background:#3c3f41;"></div><div style="position:absolute;left:0px;top:1944px;width:3120px;height:2px;background:#4a4d4f;"></div><div style="position:absolute;left:0px;top:1946px;width:3120px;height:38px;background:#3c3f41;"></div><div class="t" style="left:102.00px;top:1912px;font-family:'Liberation Sans',sans-serif;font-size:24px;line-height:27px;color:#bbbbbb;letter-spacing:0.000px;">Version Control</div><div class="t" style="left:346.50px;top:1912px;font-family:'Liberation Sans',sans-serif;font-size:24px;line-height:27px;color:#bbbbbb;letter-spacing:-0.612px;transform:scaleX(0.9603);transform-origin:0.00px 0;">TODO</div><div class="t" style="left:489.00px;top:1912px;font-family:'Liberation Sans',sans-serif;font-size:24px;line-height:27px;color:#bbbbbb;letter-spacing:-0.290px;transform:scaleX(0.9700);transform-origin:0.00px 0;">Problems</div><div class="t" style="left:663.00px;top:1912px;font-family:'Liberation Sans',sans-serif;font-size:24px;line-height:27px;color:#bbbbbb;letter-spacing:-0.057px;transform:scaleX(0.9934);transform-origin:0.00px 0;">Terminal</div><div class="t" style="left:830.00px;top:1912px;font-family:'Liberation Sans',sans-serif;font-size:24px;line-height:27px;color:#bbbbbb;letter-spacing:-0.530px;transform:scaleX(0.9401);transform-origin:0.00px 0;">Services</div><div class="t" style="left:989.00px;top:1912px;font-family:'Liberation Sans',sans-serif;font-size:24px;line-height:27px;color:#bbbbbb;letter-spacing:-0.115px;transform:scaleX(0.9841);transform-origin:0.00px 0;">Profiler</div><div class="t" style="left:1136.00px;top:1912px;font-family:'Liberation Sans',sans-serif;font-size:24px;line-height:27px;color:#bbbbbb;letter-spacing:0.000px;">Build</div><div class="t" style="left:1269.00px;top:1912px;font-family:'Liberation Sans',sans-serif;font-size:24px;line-height:27px;color:#bbbbbb;letter-spacing:-0.239px;transform:scaleX(0.9743);transform-origin:0.00px 0;">Dependencies</div><div class="t" style="left:55.00px;top:1950px;font-family:'Liberation Sans',sans-serif;font-size:26px;line-height:30px;color:#bbbbbb;letter-spacing:-0.126px;transform:scaleX(0.9843);transform-origin:0.00px 0;">Build completed successfully in 3 sec, 912 ms (22 minutes ago)</div><div class="t" style="left:2769.00px;top:1950px;font-family:'Liberation Sans',sans-serif;font-size:26px;line-height:30px;color:#bbbbbb;letter-spacing:-0.617px;transform:scaleX(0.9435);transform-origin:0.00px 0;">28:33</div><div class="t" style="left:2856.00px;top:1950px;font-family:'Liberation Sans',sans-serif;font-size:26px;line-height:30px;color:#bbbbbb;letter-spacing:-4.419px;transform:scaleX(0.8600);transform-origin:0.00px 0;">LF</div><div class="t" style="left:2905.00px;top:1950px;font-family:'Liberation Sans',sans-serif;font-size:26px;line-height:30px;color:#bbbbbb;letter-spacing:-0.721px;transform:scaleX(0.9421);transform-origin:0.00px 0;">UTF-8</div><div class="t" style="left:2999.00px;top:1950px;font-family:'Liberation Sans',sans-serif;font-size:26px;line-height:30px;color:#bbbbbb;letter-spacing:-0.134px;transform:scaleX(0.9884);transform-origin:0.00px 0;">Tab*</div><svg style="position:absolute;left:70px;top:1912px;" width="22" height="27" viewBox="0 0 22 27"><circle cx="5.8" cy="4.3" r="3.6" fill="#afb1b3"/><circle cx="5.8" cy="21.7" r="3.6" fill="#afb1b3"/><circle cx="15.7" cy="9" r="3.6" fill="#afb1b3"/><path d="M5.8 4V22M15.7 9c0 6-9.9 5-9.9 11" fill="none" stroke="#afb1b3" stroke-width="3.2"/></svg><svg style="position:absolute;left:315px;top:1915px;" width="22" height="19" viewBox="0 0 22 19"><rect x="0" y="1" width="4" height="3.4" fill="#afb1b3"/><rect x="6.5" y="1" width="14" height="3.4" fill="#afb1b3"/><rect x="0" y="7.8" width="4" height="3.4" fill="#afb1b3"/><rect x="6.5" y="7.8" width="14" height="3.4" fill="#afb1b3"/><rect x="0" y="14.6" width="4" height="3.4" fill="#afb1b3"/><rect x="6.5" y="14.6" width="14" height="3.4" fill="#afb1b3"/></svg><svg style="position:absolute;left:456px;top:1913px;" width="18" height="22" viewBox="0 0 18 22"><circle cx="9" cy="10.5" r="9" fill="#afb1b3"/><rect x="7.5" y="4" width="3" height="8" fill="#3c3f41"/><rect x="7.5" y="14" width="3" height="3" fill="#3c3f41"/></svg><svg style="position:absolute;left:629px;top:1913px;" width="24" height="22" viewBox="0 0 24 22"><rect x="1" y="1" width="22" height="20" fill="#afb1b3"/><path d="M5 5l5 4.5L5 14" fill="none" stroke="#3c3f41" stroke-width="1.8"/><path d="M11 16h8" stroke="#3c3f41" stroke-width="1.8"/></svg><svg style="position:absolute;left:794px;top:1911px;" width="32" height="28" viewBox="0 0 32 28"><path d="M7 2h12l6 10-6 10H7L1 12z" fill="#afb1b3"/><path d="M10 7l8 5-8 5z" fill="#3c3f41"/><circle cx="23" cy="21" r="4.5" fill="#31d62e" stroke="#3c3f41" stroke-width="1.2"/></svg><svg style="position:absolute;left:953px;top:1911px;" width="28" height="28" viewBox="0 0 28 28"><circle cx="10" cy="10" r="8.3" fill="none" stroke="#afb1b3" stroke-width="2.4"/><path d="M10 5v6l3 2" fill="none" stroke="#afb1b3" stroke-width="2"/><path d="M13 12l14 8-14 8z" fill="#afb1b3" stroke="#3c3f41" stroke-width="1.3"/></svg><svg style="position:absolute;left:1101px;top:1911px;" width="28" height="28" viewBox="0 0 28 28"><path d="M2 8l7-6 4 4-2 2 15 15-3 3-15-15-2 2z" fill="#afb1b3"/></svg><svg style="position:absolute;left:1234px;top:1911px;" width="26" height="28" viewBox="0 0 26 28"><path d="M13 1l12 6-12 6-12-6z" fill="#afb1b3"/><path d="M1 12l12 6 12-6M1 18l12 6 12-6" fill="none" stroke="#afb1b3" stroke-width="2.6"/></svg><svg style="position:absolute;left:10px;top:1952px;" width="28" height="28" viewBox="0 0 28 28"><rect x="3" y="3" width="22" height="19" fill="none" stroke="#afb1b3" stroke-width="2"/><rect x="2" y="24" width="19.6" height="2" fill="#afb1b3"/></svg><svg style="position:absolute;left:3072px;top:1952px;" width="26" height="26" viewBox="0 0 26 26"><path d="M3 12V8a5 5 0 0 1 10 0v2" fill="none" stroke="#afb1b3" stroke-width="2.6"/><rect x="8" y="12" width="16" height="12" fill="#afb1b3"/></svg>
</body></html>
